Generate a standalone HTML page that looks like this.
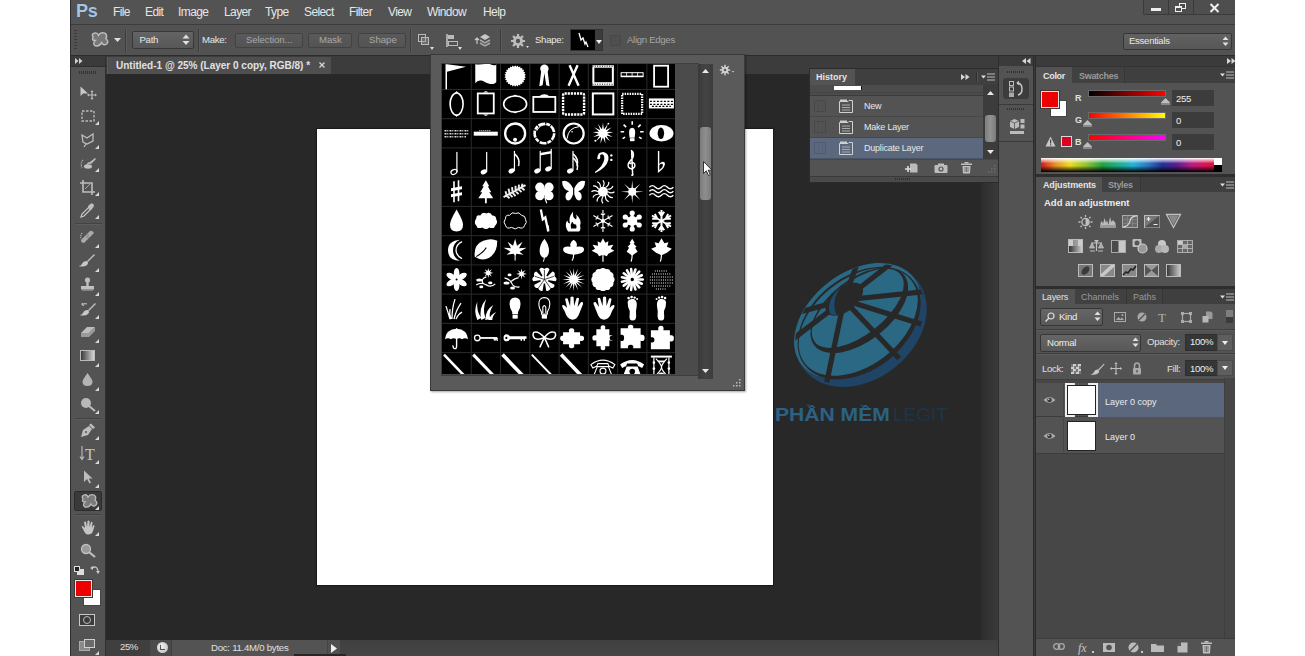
<!DOCTYPE html>
<html><head><meta charset="utf-8">
<style>
*{margin:0;padding:0;box-sizing:border-box}
html,body{width:1305px;height:656px;overflow:hidden;background:#fff}
body{font-family:"Liberation Sans",sans-serif;position:relative;color:#ddd}
.a{position:absolute}
.t{position:absolute;white-space:nowrap;line-height:1;font-family:"Liberation Sans",sans-serif}
svg.a{overflow:visible}
</style></head><body>
<div class="a" style="left:70px;top:0;width:1165px;height:656px;background:#535353"></div>
<!-- MENU BAR -->
<div class="a" style="left:70px;top:0;width:1px;height:656px;background:#2e2e2e;z-index:5"></div>
<div class="a" style="left:70px;top:0;width:1165px;height:24px;background:#535353"></div>
<div class="a" style="left:70px;top:24px;width:1165px;height:1px;background:#3c3c3c"></div>
<!-- Ps logo -->
<div class="t" style="left:76px;top:1px;font:bold 18px 'Liberation Sans',sans-serif;color:#a9c4df;letter-spacing:-0.3px;text-shadow:0 0 1px #2a4a6a">Ps</div>
<div class="t" style="left:113px;top:6px;font-size:12px;color:#e6e6e6;letter-spacing:-0.6px">File</div>
<div class="t" style="left:145px;top:6px;font-size:12px;color:#e6e6e6;letter-spacing:-0.6px">Edit</div>
<div class="t" style="left:178px;top:6px;font-size:12px;color:#e6e6e6;letter-spacing:-0.6px">Image</div>
<div class="t" style="left:224px;top:6px;font-size:12px;color:#e6e6e6;letter-spacing:-0.6px">Layer</div>
<div class="t" style="left:265px;top:6px;font-size:12px;color:#e6e6e6;letter-spacing:-0.6px">Type</div>
<div class="t" style="left:304px;top:6px;font-size:12px;color:#e6e6e6;letter-spacing:-0.6px">Select</div>
<div class="t" style="left:349px;top:6px;font-size:12px;color:#e6e6e6;letter-spacing:-0.6px">Filter</div>
<div class="t" style="left:388px;top:6px;font-size:12px;color:#e6e6e6;letter-spacing:-0.6px">View</div>
<div class="t" style="left:427px;top:6px;font-size:12px;color:#e6e6e6;letter-spacing:-0.6px">Window</div>
<div class="t" style="left:483px;top:6px;font-size:12px;color:#e6e6e6;letter-spacing:-0.6px">Help</div>
<!-- window buttons -->
<div class="a" style="left:1143px;top:0;width:92px;height:15px;background:#4e4e4e;border:1px solid #3a3a3a;border-top:0;border-right:0;border-radius:0 0 0 2px"></div>
<div class="a" style="left:1168px;top:0;width:1px;height:15px;background:#3a3a3a"></div>
<div class="a" style="left:1193px;top:0;width:1px;height:15px;background:#3a3a3a"></div>
<div class="a" style="left:1151px;top:8px;width:10px;height:3px;background:#eee"></div>
<div class="a" style="left:1179px;top:3px;width:7px;height:6px;border:1.5px solid #eee"></div>
<div class="a" style="left:1175px;top:6px;width:7px;height:6px;border:1.5px solid #eee;background:#4e4e4e;border-top-width:2.5px"></div>
<svg class="a" style="left:1209px;top:3px" width="11" height="10" viewBox="0 0 11 10"><path d="M1.5 1 L9.5 9 M9.5 1 L1.5 9" stroke="#eee" stroke-width="2"/></svg>

<!-- OPTIONS BAR -->
<div class="a" style="left:70px;top:25px;width:1165px;height:30px;background:#525252"></div>
<div class="a" style="left:70px;top:55px;width:1165px;height:1px;background:#2c2c2c"></div>
<!-- grip -->
<div class="a" style="left:74px;top:30px;width:3px;height:19px;background:repeating-linear-gradient(#3a3a3a 0 1px,transparent 1px 3px)"></div>
<!-- custom shape tool icon -->
<svg class="a" style="left:90px;top:31px" width="19" height="17" viewBox="0 0 18 16"><path d="M3 6 Q1 3 4 2 Q7 1 8 4 Q10 0.5 14 2 Q17 4 15 7 Q18 9.5 16 12 Q13 14.5 11 11 Q9 15 5 14 Q2 12 5 9 Q1 9 3 6 Z" fill="#777" stroke="#bdbdbd" stroke-width="1.4"/></svg>
<svg class="a" style="left:114px;top:38px" width="7" height="5" viewBox="0 0 7 5"><path d="M0 0H7L3.5 4Z" fill="#e0e0e0"/></svg>
<div class="a" style="left:125px;top:29px;width:1px;height:23px;background:#3c3c3c"></div>
<div class="a" style="left:126px;top:29px;width:1px;height:23px;background:#5c5c5c"></div>
<!-- Path dropdown -->
<div class="a" style="left:132px;top:31px;width:62px;height:18px;background:linear-gradient(#646464,#575757);border:1px solid #383838;border-radius:2px"></div>
<div class="t" style="left:139.5px;top:35px;font-size:9.6px;color:#e8e8e8;letter-spacing:-0.3px">Path</div>
<svg class="a" style="left:182px;top:34px" width="8" height="12" viewBox="0 0 8 12"><path d="M0.5 4.5H7.5L4 0.5Z M0.5 7H7.5L4 11Z" fill="#e0e0e0"/></svg>
<div class="a" style="left:198px;top:29px;width:1px;height:23px;background:#3c3c3c"></div>
<div class="a" style="left:199px;top:29px;width:1px;height:23px;background:#5c5c5c"></div>
<div class="t" style="left:202px;top:35px;font-size:9.6px;color:#e8e8e8;letter-spacing:-0.3px">Make:</div>
<!-- buttons -->
<div class="a" style="left:235px;top:33px;width:68px;height:15px;background:linear-gradient(#5a5a5a,#535353);border:1px solid #424242;border-radius:2px"></div>
<div class="t" style="left:246px;top:35px;font-size:9.6px;color:#a9a9a9;letter-spacing:-0.1px">Selection...</div>
<div class="a" style="left:308px;top:33px;width:44px;height:15px;background:linear-gradient(#5a5a5a,#535353);border:1px solid #424242;border-radius:2px"></div>
<div class="t" style="left:319px;top:35px;font-size:9.6px;color:#a9a9a9">Mask</div>
<div class="a" style="left:358px;top:33px;width:48px;height:15px;background:linear-gradient(#5a5a5a,#535353);border:1px solid #424242;border-radius:2px"></div>
<div class="t" style="left:369px;top:35px;font-size:9.6px;color:#a9a9a9">Shape</div>
<div class="a" style="left:410px;top:29px;width:1px;height:23px;background:#3c3c3c"></div>
<div class="a" style="left:411px;top:29px;width:1px;height:23px;background:#5c5c5c"></div>
<!-- path ops icon -->
<div class="a" style="left:418px;top:34px;width:8px;height:8px;border:1px solid #bbb"></div>
<div class="a" style="left:421px;top:37px;width:8px;height:8px;border:1px solid #bbb;background:rgba(150,150,150,.4)"></div>
<svg class="a" style="left:430px;top:47px" width="4" height="3"><path d="M0 0H4L2 3Z" fill="#ddd"/></svg>
<!-- align icon -->
<div class="a" style="left:446px;top:34px;width:2px;height:13px;background:#aaa"></div>
<div class="a" style="left:448px;top:35px;width:6px;height:4px;background:#bbb"></div>
<div class="a" style="left:448px;top:41px;width:10px;height:5px;border:1px solid #bbb"></div>
<svg class="a" style="left:458px;top:47px" width="4" height="3"><path d="M0 0H4L2 3Z" fill="#ddd"/></svg>
<!-- arrange icon -->
<svg class="a" style="left:472px;top:32px" width="20" height="18" viewBox="0 0 20 18"><path d="M3 8 L5 6 L7 8 M5 6 V12" stroke="#ccc" fill="none" stroke-width="1.2"/><path d="M8 5 L13 2 L18 5 L13 8Z" fill="#c8c8c8"/><path d="M8 8 L13 11 L18 8 M8 11 L13 14 L18 11" stroke="#aaa" stroke-width="1.5" fill="none"/></svg>
<div class="a" style="left:500px;top:29px;width:1px;height:23px;background:#3c3c3c"></div>
<div class="a" style="left:501px;top:29px;width:1px;height:23px;background:#5c5c5c"></div>
<!-- gear -->
<svg class="a" style="left:509px;top:32px" width="20" height="18" viewBox="0 0 20 18"><circle cx="9" cy="9" r="5" fill="#bdbdbd"/><g stroke="#bdbdbd" stroke-width="2.2"><path d="M9 2V16M2 9H16M4 4L14 14M14 4L4 14"/></g><circle cx="9" cy="9" r="2.2" fill="#525252"/><path d="M17 14H20L18.5 16Z" fill="#ddd"/></svg>
<div class="t" style="left:535px;top:35px;font-size:9.6px;color:#e8e8e8;letter-spacing:-0.3px">Shape:</div>
<!-- shape swatch -->
<div class="a" style="left:570px;top:29px;width:33px;height:22px;background:#3c3c3c;border:1px solid #333"></div>
<div class="a" style="left:571px;top:30px;width:24px;height:20px;background:#000"></div>
<svg class="a" style="left:578px;top:32px" width="11" height="16" viewBox="0 0 11 16"><path d="M1 1 L3 8 L5 6 L7 12 L8 10 L10 15" stroke="#fff" stroke-width="1.3" fill="none"/></svg>
<svg class="a" style="left:596px;top:40px" width="6" height="4"><path d="M0 0H6L3 4Z" fill="#eee"/></svg>
<!-- checkbox -->
<div class="a" style="left:610px;top:35px;width:11px;height:11px;background:#4f4f4f;border:1px solid #474747;border-radius:1px"></div>
<div class="t" style="left:627px;top:35px;font-size:9.6px;color:#a5a5a5;letter-spacing:-0.3px">Align Edges</div>
<!-- essentials -->
<div class="a" style="left:1123px;top:33px;width:109px;height:17px;background:linear-gradient(#626262,#575757);border:1px solid #363636;border-radius:2px"></div>
<div class="t" style="left:1129px;top:36px;font-size:9.6px;color:#e8e8e8;letter-spacing:-0.3px">Essentials</div>
<svg class="a" style="left:1222px;top:36px" width="7" height="11" viewBox="0 0 7 11"><path d="M0.5 4H6.5L3.5 0.5Z M0.5 6.5H6.5L3.5 10Z" fill="#e0e0e0"/></svg>
<!-- TAB ROW -->
<div class="a" style="left:106px;top:56px;width:892px;height:18px;background:#3c3c3c"></div>
<div class="a" style="left:107px;top:57px;width:224px;height:17px;background:#4f4f4f;border-left:1px solid #5a5a5a"></div>
<div class="t" style="left:116px;top:61px;font-weight:bold;font-size:10px;color:#e2e2e2">Untitled-1 @ 25% (Layer 0 copy, RGB/8) *</div>
<svg class="a" style="left:319px;top:62px" width="6" height="6"><path d="M0.5 0.5L5.5 5.5M5.5 0.5L0.5 5.5" stroke="#d8d8d8" stroke-width="1.3"/></svg>
<!-- CANVAS AREA -->
<div class="a" style="left:106px;top:74px;width:892px;height:566px;background:#282828"></div>
<div class="a" style="left:981px;top:183px;width:17px;height:457px;background:linear-gradient(90deg,#2c2c2c,#3a3a3a)"></div>
<div class="a" style="left:317px;top:129px;width:456px;height:456px;background:#fff;box-shadow:0 0 1px 1px #1a1a1a"></div>
<!-- STATUS BAR -->
<div class="a" style="left:106px;top:640px;width:892px;height:16px;background:linear-gradient(#404040,#454545)"></div>
<div class="a" style="left:106px;top:640px;width:44px;height:16px;background:#3f3f3f"></div>
<div class="t" style="left:120px;top:642px;font-size:9.6px;color:#e0e0e0;letter-spacing:-0.4px">25%</div>
<div class="a" style="left:150px;top:640px;width:22px;height:16px;background:#4b4b4b;border-right:1px solid #3e3e3e"></div>
<div class="a" style="left:157px;top:642px;width:11px;height:11px;border-radius:50%;background:radial-gradient(circle at 40% 40%,#f0f0f0,#b8b8b8)"></div>
<div class="a" style="left:160px;top:645px;width:5px;height:5px;border-left:1.5px solid #555;border-bottom:1.5px solid #555"></div>
<div class="a" style="left:172px;top:640px;width:155px;height:16px;background:#535353"></div>
<div class="t" style="left:211px;top:643px;font-size:9.6px;color:#e0e0e0;letter-spacing:-0.25px">Doc: 11.4M/0 bytes</div>
<div class="a" style="left:327px;top:640px;width:13px;height:16px;background:#505050;border-left:1px solid #444"></div>
<svg class="a" style="left:331px;top:644px" width="6" height="9"><path d="M0 0L6 4.5L0 9Z" fill="#f0f0f0"/></svg>
<div class="a" style="left:294px;top:654px;width:52px;height:2px;background:#262626"></div>
<!-- WATERMARK -->
<svg class="a" style="left:780px;top:250px" width="160" height="150" viewBox="780 250 160 150">
<defs><clipPath id="disc"><ellipse cx="0" cy="-2" rx="71" ry="52"/></clipPath></defs>
<g transform="translate(861 325.5) rotate(-38)">
<ellipse cx="0" cy="0" rx="72" ry="54" fill="#1f4466"/>
<ellipse cx="0" cy="-6" rx="71" ry="48" fill="#2a6883"/>
<ellipse cx="0" cy="-3" rx="69" ry="47" fill="#282828"/>
<ellipse cx="0" cy="-4.5" rx="67.5" ry="43.5" fill="#2a6883"/>
<ellipse cx="8" cy="-13" rx="57" ry="31" fill="#282828"/>
<ellipse cx="8" cy="-15.5" rx="54.5" ry="26.5" fill="#2a6883"/>
<g clip-path="url(#disc)">
<g transform="rotate(38) translate(-861 -325.5)" stroke="#282828" stroke-width="5.2">
<path d="M844 300 L862 250"/>
<path d="M844 300 L902 255"/>
<path d="M844 300 L940 290"/>
<path d="M844 300 L940 330"/>
<path d="M844 300 L910 370"/>
<path d="M844 300 L823 400"/>
<path d="M844 300 L785 345"/>
<path d="M844 300 L785 316"/>
</g>
</g>
<ellipse cx="3" cy="-31" rx="22" ry="12" fill="#282828"/>
<path d="M-17 -28 Q-14 -41 8 -43 Q-9 -38 -13 -23 Z" fill="#1f4a70"/>
</g>
</svg>
<div class="t" style="left:775px;top:405px;font-weight:bold;font-size:19px;color:#2b6283;transform:scaleX(1.11);transform-origin:0 0">PHẦN MỀM</div>
<div class="t" style="left:893px;top:405px;font-size:19px;color:#1d3549">LEGIT</div>
<!-- POPUP -->
<div class="a" style="left:430px;top:54px;width:315px;height:337px;background:#5a5a5a;border:1px solid #3a3a3a;box-shadow:1px 1px 2px rgba(0,0,0,.35)"></div>
<div class="a" style="left:441px;top:63px;width:258px;height:313px;background:#4b4b4b;border:1px solid #3e3e3e"></div>
<div class="a" style="left:442px;top:64px;width:233px;height:310px;overflow:hidden;background:#000">
<svg width="233" height="310" viewBox="442 64 233 310" style="position:absolute;left:0;top:0">
<rect x="442" y="88.94" width="234" height="1" fill="#2b2b2b"/>
<rect x="442" y="118.18" width="234" height="1" fill="#2b2b2b"/>
<rect x="442" y="147.42" width="234" height="1" fill="#2b2b2b"/>
<rect x="442" y="176.66" width="234" height="1" fill="#2b2b2b"/>
<rect x="442" y="205.90" width="234" height="1" fill="#2b2b2b"/>
<rect x="442" y="235.14" width="234" height="1" fill="#2b2b2b"/>
<rect x="442" y="264.38" width="234" height="1" fill="#2b2b2b"/>
<rect x="442" y="293.62" width="234" height="1" fill="#2b2b2b"/>
<rect x="442" y="322.86" width="234" height="1" fill="#2b2b2b"/>
<rect x="442" y="352.10" width="234" height="1" fill="#2b2b2b"/>
<rect x="470.77" y="64" width="1" height="310" fill="#2b2b2b"/>
<rect x="500.04" y="64" width="1" height="310" fill="#2b2b2b"/>
<rect x="529.31" y="64" width="1" height="310" fill="#2b2b2b"/>
<rect x="558.58" y="64" width="1" height="310" fill="#2b2b2b"/>
<rect x="587.85" y="64" width="1" height="310" fill="#2b2b2b"/>
<rect x="617.12" y="64" width="1" height="310" fill="#2b2b2b"/>
<rect x="646.39" y="64" width="1" height="310" fill="#2b2b2b"/>
<g transform="translate(442.00 60.20)"><path fill="#fff" d="M3.5 4 h1.5 v25 h-1.5z M5 4 L24 6.5 L5 11.5z"/></g>
<g transform="translate(471.27 60.20)"><path fill="#fff" d="M4 4 C10 5 14 3 19 4 C22 5 24 6 25 4 L25 22 C22 25 18 24 14 22 C10 19 6 20 4 23z"/></g>
<g transform="translate(500.54 60.20)"><path fill="#fff" d="M14.60,5.00 L15.73,6.47 L17.18,5.31 L17.93,7.01 L19.62,6.24 L19.94,8.06 L21.76,7.72 L21.64,9.57 L23.49,9.66 L22.92,11.43 L24.70,11.97 L23.73,13.55 L25.32,14.50 L24.00,15.80 L25.32,17.10 L23.73,18.05 L24.70,19.63 L22.92,20.17 L23.49,21.94 L21.64,22.03 L21.76,23.88 L19.94,23.54 L19.62,25.36 L17.93,24.59 L17.18,26.29 L15.73,25.13 L14.60,26.60 L13.47,25.13 L12.02,26.29 L11.27,24.59 L9.58,25.36 L9.26,23.54 L7.44,23.88 L7.56,22.03 L5.71,21.94 L6.28,20.17 L4.50,19.63 L5.47,18.05 L3.88,17.10 L5.20,15.80 L3.88,14.50 L5.47,13.55 L4.50,11.97 L6.28,11.43 L5.71,9.66 L7.56,9.57 L7.44,7.72 L9.26,8.06 L9.58,6.24 L11.27,7.01 L12.02,5.31 L13.47,6.47Z"/></g>
<g transform="translate(529.81 60.20)"><circle fill="#fff" cx="14.6" cy="8.5" r="4.2"/><path fill="#fff" d="M11.5 10 L9.5 26 L12.8 25 L14.6 13z M17.7 10 L19.7 26 L16.4 25 L14.6 13z"/></g>
<g transform="translate(559.08 60.20)"><path fill="none" stroke="#fff" stroke-width="2.4" d="M10.5 5 L19.5 25.5 M18.5 5 L9.5 25.5"/></g>
<g transform="translate(588.35 60.20)"><rect fill="#fff" x="4" y="5" width="21.5" height="20.5"/><rect fill="#000" x="6" y="7.5" width="17.5" height="14.5"/><path stroke="#000" stroke-width="1" stroke-dasharray="1 1.4" d="M4 6 H25 M4 24 H25"/></g>
<g transform="translate(617.62 60.20)"><rect fill="#fff" x="3" y="12" width="23" height="5"/><rect fill="#000" x="4" y="13" width="21" height="2.4"/><path stroke="#fff" stroke-width="0.8" d="M9 12 V17 M14.5 12 V17 M20 12 V17"/></g>
<g transform="translate(646.89 60.20)"><rect fill="none" stroke="#fff" stroke-width="1.8" x="7.2" y="5.5" width="14" height="21"/></g>
<g transform="translate(442.00 89.44)"><ellipse fill="none" stroke="#fff" stroke-width="1.6" cx="14.6" cy="14.6" rx="6.5" ry="11"/><path fill="#fff" d="M13 3.6h3.2l-1.6-2z M13 25.6h3.2l-1.6 2z"/></g>
<g transform="translate(471.27 89.44)"><rect fill="none" stroke="#fff" stroke-width="1.8" x="6.5" y="4" width="16" height="20"/><path fill="#fff" d="M12 3 Q14.6 0.5 17 3z M12 25 Q14.6 27.5 17 25z"/></g>
<g transform="translate(500.54 89.44)"><ellipse fill="none" stroke="#fff" stroke-width="1.6" cx="14.6" cy="14.6" rx="11.5" ry="8"/><path fill="#fff" d="M12.5 6.6 Q14.6 4 16.7 6.6z M12.5 22.6 Q14.6 25.2 16.7 22.6z"/></g>
<g transform="translate(529.81 89.44)"><rect fill="none" stroke="#fff" stroke-width="1.8" x="3.5" y="7.5" width="22" height="15"/><path fill="#fff" d="M9 7 Q14.6 2.5 20 7z"/></g>
<g transform="translate(559.08 89.44)"><rect fill="none" stroke="#fff" stroke-width="2.4" stroke-dasharray="2.2 0.9" x="4" y="4" width="21" height="21" rx="1.5"/></g>
<g transform="translate(588.35 89.44)"><rect fill="none" stroke="#fff" stroke-width="2" x="4.5" y="4" width="20.5" height="21"/></g>
<g transform="translate(617.62 89.44)"><rect fill="none" stroke="#fff" stroke-width="2.3" stroke-dasharray="1.5 1" x="4.5" y="4.5" width="20" height="20"/></g>
<g transform="translate(646.89 89.44)"><rect fill="#fff" x="2" y="9" width="25" height="10"/><path stroke="#000" stroke-width="1.2" stroke-dasharray="2 1.5" d="M3 12 H26 M3 15 H26 M5 17 H24"/></g>
<g transform="translate(442.00 118.68)"><path stroke="#ddd" stroke-width="1.6" stroke-dasharray="2 0.8 1 1.2" d="M2.5 12 H26.5 M2.5 15 H26.5 M2.5 18 H24"/></g>
<g transform="translate(471.27 118.68)"><rect fill="#fff" x="2.5" y="13" width="24" height="4"/><path stroke="#fff" stroke-width="1" stroke-dasharray="1 1" d="M8 12 H20"/></g>
<g transform="translate(500.54 118.68)"><circle fill="none" stroke="#fff" stroke-width="2.3" cx="14.6" cy="14.8" r="10"/><circle fill="#fff" cx="14.5" cy="21" r="2"/><path fill="#fff" d="M8 6 Q11 3 14 6z M15 6 Q18 3 21 6z"/></g>
<g transform="translate(529.81 118.68)"><circle fill="none" stroke="#fff" stroke-width="2.6" stroke-dasharray="7 1.2 4 1" cx="14.6" cy="14.8" r="9.8"/><path fill="none" stroke="#fff" stroke-width="1" d="M7 12 Q10 6 16 6"/></g>
<g transform="translate(559.08 118.68)"><circle fill="none" stroke="#fff" stroke-width="2.2" cx="14.6" cy="14.8" r="10"/><path fill="none" stroke="#fff" stroke-width="1" d="M8 20 Q9 9 20 8"/><circle fill="#fff" cx="13" cy="13" r="0.8"/></g>
<g transform="translate(588.35 118.68)"><path fill="#fff" d="M14.60,4.10 L15.56,10.72 L19.48,5.30 L17.25,11.61 L23.24,8.64 L18.34,13.18 L25.02,13.33 L18.57,15.08 L24.42,18.32 L17.89,16.87 L21.56,22.46 L16.46,18.14 L17.11,24.79 L14.60,18.60 L12.09,24.79 L12.74,18.14 L7.64,22.46 L11.31,16.87 L4.78,18.32 L10.63,15.08 L4.18,13.33 L10.86,13.18 L5.96,8.64 L11.95,11.61 L9.72,5.30 L13.64,10.72Z"/><circle fill="#fff" cx="14.6" cy="14.6" r="4.5"/><circle fill="#fff" cx="20" cy="5" r="0.9"/><circle fill="#fff" cx="7" cy="22" r="1"/></g>
<g transform="translate(617.62 118.68)"><path fill="#fff" d="M11.5 15 Q11 9 14.6 9 Q18 9 17.5 15 L17 19 H12z"/><rect fill="#fff" x="12.3" y="19.5" width="4.6" height="3"/><path fill="none" stroke="#fff" stroke-width="1.6" d="M14.6 2.5V6 M6 6 L8.5 8.5 M23 6 L20.5 8.5 M3 13 H6.5 M26 13 H22.5 M5 20 L7.5 18.5 M24 20 L21.5 18.5"/></g>
<g transform="translate(646.89 118.68)"><ellipse fill="#fff" cx="14.6" cy="14.6" rx="12" ry="8.2"/><ellipse fill="#000" cx="14" cy="14.6" rx="3.2" ry="5.8"/></g>
<g transform="translate(442.00 147.92)"><ellipse fill="none" stroke="#fff" stroke-width="1.2" cx="12" cy="24" rx="3.2" ry="2.3" transform="rotate(-25 12 24)"/><rect fill="#fff" x="14.3" y="4" width="1.2" height="20"/></g>
<g transform="translate(471.27 147.92)"><ellipse fill="#fff"  cx="12.5" cy="24" rx="3.2" ry="2.3" transform="rotate(-25 12.5 24)"/><rect fill="#fff" x="14.8" y="4" width="1.2" height="20"/></g>
<g transform="translate(500.54 147.92)"><ellipse fill="#fff"  cx="11" cy="23" rx="3.2" ry="2.3" transform="rotate(-25 11 23)"/><rect fill="#fff" x="13.3" y="3" width="1.2" height="20"/><path fill="none" stroke="#fff" stroke-width="1.6" d="M14 6 Q20 11 18 18"/></g>
<g transform="translate(529.81 147.92)"><g><ellipse fill="#fff"  cx="7.5" cy="23" rx="3.2" ry="2.3" transform="rotate(-25 7.5 23)"/><rect fill="#fff" x="9.8" y="3" width="1.2" height="20"/><ellipse fill="#fff"  cx="18.5" cy="21" rx="3.2" ry="2.3" transform="rotate(-25 18.5 21)"/><rect fill="#fff" x="20.8" y="1" width="1.2" height="20"/><path fill="#fff" d="M10.2 5 L21.5 3 L21.5 5.5 L10.2 7.5z"/></g></g>
<g transform="translate(559.08 147.92)"><ellipse fill="#fff"  cx="11" cy="23" rx="3.2" ry="2.3" transform="rotate(-25 11 23)"/><rect fill="#fff" x="13.3" y="3" width="1.2" height="20"/><path fill="none" stroke="#fff" stroke-width="1.6" d="M14 6 Q20 11 18 18"/><path fill="none" stroke="#fff" stroke-width="1.6" d="M14 10 Q20 15 18 22"/></g>
<g transform="translate(588.35 147.92)"><path fill="#fff" d="M9 10 Q9 4 15 4 Q21 5 20 12 Q18 20 7 25 L6.5 24 Q15 18 16 11 Q16 6 13 6.5 Q11 7 12 9 Q12 12 9 11z"/><circle fill="#fff" cx="23" cy="7.5" r="1.2"/><circle fill="#fff" cx="23" cy="12" r="1.2"/></g>
<g transform="translate(617.62 147.92)"><path fill="none" stroke="#fff" stroke-width="1.5" d="M15 26 Q16 28 13.5 27 M15 26 L14 3 Q17 5 15 10 L11 15 Q9 20 14 21 Q18 20 17 16 Q15 13 12 16"/></g>
<g transform="translate(646.89 147.92)"><path fill="#fff" d="M11 3 h1.4 v13 Q16 12 18 15 Q19 19 11 25z"/><path fill="#000" d="M12.4 17 Q15 15 16 16.5 Q16.5 19 12.4 22z"/></g>
<g transform="translate(442.00 177.16)"><path fill="none" stroke="#fff" stroke-width="1.6" d="M12 4 V25 M16.5 3 V24"/><path fill="#fff" d="M9 11 L20 9 V12 L9 14z M9 17 L20 15 V18 L9 20z"/></g>
<g transform="translate(471.27 177.16)"><path fill="#fff" d="M14.6 3 L18 9 L16.5 9 L20 15 L18 15 L22 21 L15.5 21 V26 H13.7 V21 L7 21 L11 15 L9 15 L12.5 9 L11 9z"/></g>
<g transform="translate(500.54 177.16)"><path stroke="#eee" stroke-width="1.9" fill="none" d="M3 20 L25 8 M6 18 L5 14 M9 16.5 L8 11.5 M12 15 L11.5 10 M15 13.3 L15 8.5 M18 11.7 L18.5 7.5 M21 10 L22 6.5 M6 18.5 L9 21 M9 17 L12 20 M12 15.5 L15 19 M15 14 L18 17 M18 12 L21 15 M21 10.5 L24 13"/></g>
<g transform="translate(529.81 177.16)"><circle fill="#fff" cx="10" cy="10" r="4.6"/><circle fill="#fff" cx="19.2" cy="10" r="4.6"/><circle fill="#fff" cx="10" cy="18.5" r="4.6"/><circle fill="#fff" cx="19.2" cy="18.5" r="4.6"/><rect fill="#fff" x="11" y="11" width="7" height="7"/><path fill="none" stroke="#fff" stroke-width="1.2" d="M15 20 Q16 24 17 26"/></g>
<g transform="translate(559.08 177.16)"><path fill="#fff" d="M14 11 Q9 2 3 4 Q3 12 10 14 Q5 16 7 22 Q11 26 14 17z M15.2 11 Q20 2 26 4 Q26 12 19 14 Q24 16 22 22 Q18 26 15.2 17z"/></g>
<g transform="translate(588.35 177.16)"><path stroke="#fff" stroke-width="1.2" fill="none" d="M19.60 14.60 Q23.29 16.93 26.10 14.60"/><path stroke="#fff" stroke-width="1.2" fill="none" d="M18.93 17.10 Q20.96 20.96 24.56 20.35"/><path stroke="#fff" stroke-width="1.2" fill="none" d="M17.10 18.93 Q16.93 23.29 20.35 24.56"/><path stroke="#fff" stroke-width="1.2" fill="none" d="M14.60 19.60 Q12.27 23.29 14.60 26.10"/><path stroke="#fff" stroke-width="1.2" fill="none" d="M12.10 18.93 Q8.24 20.96 8.85 24.56"/><path stroke="#fff" stroke-width="1.2" fill="none" d="M10.27 17.10 Q5.91 16.93 4.64 20.35"/><path stroke="#fff" stroke-width="1.2" fill="none" d="M9.60 14.60 Q5.91 12.27 3.10 14.60"/><path stroke="#fff" stroke-width="1.2" fill="none" d="M10.27 12.10 Q8.24 8.24 4.64 8.85"/><path stroke="#fff" stroke-width="1.2" fill="none" d="M12.10 10.27 Q12.27 5.91 8.85 4.64"/><path stroke="#fff" stroke-width="1.2" fill="none" d="M14.60 9.60 Q16.93 5.91 14.60 3.10"/><path stroke="#fff" stroke-width="1.2" fill="none" d="M17.10 10.27 Q20.96 8.24 20.35 4.64"/><path stroke="#fff" stroke-width="1.2" fill="none" d="M18.93 12.10 Q23.29 12.27 24.56 8.85"/><circle fill="#fff" cx="14.6" cy="14.6" r="5"/></g>
<g transform="translate(617.62 177.16)"><path fill="#fff" d="M14.60,3.10 L15.44,12.57 L22.73,6.47 L16.63,13.76 L26.10,14.60 L16.63,15.44 L22.73,22.73 L15.44,16.63 L14.60,26.10 L13.76,16.63 L6.47,22.73 L12.57,15.44 L3.10,14.60 L12.57,13.76 L6.47,6.47 L13.76,12.57Z"/><circle fill="#fff" cx="14.6" cy="14.6" r="4"/></g>
<g transform="translate(646.89 177.16)"><path fill="none" stroke="#fff" stroke-width="1.4" d="M2.5 10 Q5.5 7 8.5 10 T14.5 10 T20.5 10 T26.5 10 M2.5 14 Q5.5 11 8.5 14 T14.5 14 T20.5 14 T26.5 14 M2.5 18 Q5.5 15 8.5 18 T14.5 18 T20.5 18 T26.5 18"/></g>
<g transform="translate(442.00 206.40)"><path fill="#fff" d="M14.6 3 Q21 14 21 18 Q21 25 14.6 25 Q8 25 8 18 Q8 14 14.6 3z"/></g>
<g transform="translate(471.27 206.40)"><path fill="#fff" d="M5 12 Q5 8 9 9 Q11 5 15 7 Q19 5 21 9 Q25 9 25 13 Q27 16 24 19 Q23 23 18 21 Q15 24 11 21 Q6 23 5 19 Q2 16 5 12z"/></g>
<g transform="translate(500.54 206.40)"><path fill="none" stroke="#fff" stroke-width="1" d="M5 12 Q5 8 9 9 Q11 5 15 7 Q19 5 21 9 Q25 9 25 13 Q27 16 24 19 Q23 23 18 21 Q15 24 11 21 Q6 23 5 19 Q2 16 5 12z"/></g>
<g transform="translate(529.81 206.40)"><path fill="none" stroke="#fff" stroke-width="2.3" d="M11 3 L13 13 L15.5 11 L18.5 25 L17.8 19"/></g>
<g transform="translate(559.08 206.40)"><path fill="#fff" d="M9 25 Q5 19 8 14 Q9 17 11 17 Q9 11 14 5 Q13 11 17 13 Q18 10 17 8 Q23 13 21 19 Q22 23 20 25z"/><path fill="#000" d="M12 22 Q11 18 13 15 Q15 19 17 18 Q18 21 17 22z"/></g>
<g transform="translate(588.35 206.40)"><path stroke="#fff" stroke-width="1.1" fill="none" d="M14.6 14.6 L14.60 3.60 M16.77 7.35 L14.60 8.60 L12.43 7.35"/><path stroke="#fff" stroke-width="1.1" fill="none" d="M14.6 14.6 L24.13 9.10 M21.96 12.85 L19.80 11.60 L19.80 9.10"/><path stroke="#fff" stroke-width="1.1" fill="none" d="M14.6 14.6 L24.13 20.10 M19.80 20.10 L19.80 17.60 L21.96 16.35"/><path stroke="#fff" stroke-width="1.1" fill="none" d="M14.6 14.6 L14.60 25.60 M12.43 21.85 L14.60 20.60 L16.77 21.85"/><path stroke="#fff" stroke-width="1.1" fill="none" d="M14.6 14.6 L5.07 20.10 M7.24 16.35 L9.40 17.60 L9.40 20.10"/><path stroke="#fff" stroke-width="1.1" fill="none" d="M14.6 14.6 L5.07 9.10 M9.40 9.10 L9.40 11.60 L7.24 12.85"/><circle fill="#fff" cx="14.6" cy="14.6" r="2"/></g>
<g transform="translate(617.62 206.40)"><path stroke="#fff" stroke-width="3" fill="none" d="M14.6 14.6 L14.60 4.60"/><circle fill="#fff" cx="14.60" cy="6.60" r="2.6"/><path stroke="#fff" stroke-width="3" fill="none" d="M14.6 14.6 L23.26 9.60"/><circle fill="#fff" cx="21.53" cy="10.60" r="2.6"/><path stroke="#fff" stroke-width="3" fill="none" d="M14.6 14.6 L23.26 19.60"/><circle fill="#fff" cx="21.53" cy="18.60" r="2.6"/><path stroke="#fff" stroke-width="3" fill="none" d="M14.6 14.6 L14.60 24.60"/><circle fill="#fff" cx="14.60" cy="22.60" r="2.6"/><path stroke="#fff" stroke-width="3" fill="none" d="M14.6 14.6 L5.94 19.60"/><circle fill="#fff" cx="7.67" cy="18.60" r="2.6"/><path stroke="#fff" stroke-width="3" fill="none" d="M14.6 14.6 L5.94 9.60"/><circle fill="#fff" cx="7.67" cy="10.60" r="2.6"/><circle fill="#fff" cx="14.6" cy="14.6" r="5"/></g>
<g transform="translate(646.89 206.40)"><path stroke="#fff" stroke-width="2" fill="none" d="M14.6 14.6 L14.60 3.60 M17.28 5.35 L14.60 9.60 L11.92 5.35"/><path stroke="#fff" stroke-width="2" fill="none" d="M14.6 14.6 L24.13 9.10 M23.95 12.30 L18.93 12.10 L21.27 7.65"/><path stroke="#fff" stroke-width="2" fill="none" d="M14.6 14.6 L24.13 20.10 M21.27 21.55 L18.93 17.10 L23.95 16.90"/><path stroke="#fff" stroke-width="2" fill="none" d="M14.6 14.6 L14.60 25.60 M11.92 23.85 L14.60 19.60 L17.28 23.85"/><path stroke="#fff" stroke-width="2" fill="none" d="M14.6 14.6 L5.07 20.10 M5.25 16.90 L10.27 17.10 L7.93 21.55"/><path stroke="#fff" stroke-width="2" fill="none" d="M14.6 14.6 L5.07 9.10 M7.93 7.65 L10.27 12.10 L5.25 12.30"/></g>
<g transform="translate(442.00 235.64)"><path fill="#fff" d="M18 4 Q6 5 6 14.6 Q6 25 18 25 Q11 22 11 14.6 Q11 7 18 4z"/><path fill="none" stroke="#fff" stroke-width="1.3" d="M20 6 Q14 9 14 14.6 Q14 20 20 23"/></g>
<g transform="translate(471.27 235.64)"><path fill="#fff" d="M3.5 21 Q2 9 12 5 Q20 2 26 5 Q26 17 18 22 Q11 26 3.5 21z"/><path stroke="#000" stroke-width="1.1" fill="none" d="M5 21 Q12 17 15 12"/></g>
<g transform="translate(500.54 235.64)"><path fill="#fff" d="M14.6 3 L16.5 10 L22 6 L18.5 12.5 L26 12 L19 16 L23 19 L16 18 L14.6 20 L13 18 L6 19 L10 16 L3 12 L10.5 12.5 L7 6 L12.5 10z"/><path fill="none" stroke="#fff" stroke-width="1" d="M14.6 18 V25"/></g>
<g transform="translate(529.81 235.64)"><path fill="#fff" d="M14.6 3 Q20 10 19 17 Q18 22 14.6 22 Q11 22 10 17 Q9 10 14.6 3z"/><path fill="none" stroke="#fff" stroke-width="1" d="M14.6 20 Q14.6 24 13.5 26"/></g>
<g transform="translate(559.08 235.64)"><path fill="#fff" d="M14.6 4 Q19 7 17.5 11 Q25 10 25 14 Q25 18 14.6 19 Q4 18 4 14 Q4 10 11.5 11 Q10 7 14.6 4z"/><path fill="none" stroke="#fff" stroke-width="1.2" d="M14.6 18 Q14.6 23 13 25"/></g>
<g transform="translate(588.35 235.64)"><path fill="#fff" d="M14.6 2.5 L17 7 L20 5.5 L19.5 10 L25 9 L22.5 13 L26 15 L20 18 L18.5 20.5 L14.6 19 L10.7 20.5 L9.2 18 L3.2 15 L6.7 13 L4.2 9 L9.7 10 L9.2 5.5 L12.2 7z"/><path fill="none" stroke="#fff" stroke-width="1.2" d="M14.6 18 V26"/></g>
<g transform="translate(617.62 235.64)"><path fill="#fff" d="M14.6 3 L17 7 L16 8 L19 11 L17.5 12 L20 16 L17 18 L14.6 20 L12 18 L9 16 L11.5 12 L10 11 L13 8 L12 7z"/><path fill="none" stroke="#fff" stroke-width="1.2" d="M14.6 18 Q14.6 23 13.5 26"/></g>
<g transform="translate(646.89 235.64)"><path fill="#fff" d="M14.6 2.5 L17.5 7.5 L21.5 6.5 L20 11 L25 13 L20 17 L14.6 19.5 L9.2 17 L4.2 13 L9.2 11 L7.7 6.5 L11.7 7.5z"/><path fill="none" stroke="#fff" stroke-width="1.2" d="M14.6 18 Q14.6 23 13.5 26"/></g>
<g transform="translate(442.00 264.88)"><ellipse fill="#fff" cx="14.60" cy="8.60" rx="5.5" ry="2.8" transform="rotate(-90 14.60 8.60)"/><ellipse fill="#fff" cx="19.80" cy="11.60" rx="5.5" ry="2.8" transform="rotate(-30 19.80 11.60)"/><ellipse fill="#fff" cx="19.80" cy="17.60" rx="5.5" ry="2.8" transform="rotate(30 19.80 17.60)"/><ellipse fill="#fff" cx="14.60" cy="20.60" rx="5.5" ry="2.8" transform="rotate(90 14.60 20.60)"/><ellipse fill="#fff" cx="9.40" cy="17.60" rx="5.5" ry="2.8" transform="rotate(150 9.40 17.60)"/><ellipse fill="#fff" cx="9.40" cy="11.60" rx="5.5" ry="2.8" transform="rotate(210 9.40 11.60)"/><circle fill="#fff" cx="14.6" cy="14.6" r="3.5"/><circle fill="#000" cx="14.6" cy="14.6" r="1"/></g>
<g transform="translate(471.27 264.88)"><path fill="#fff" d="M17.00,3.00 L17.77,6.15 L20.54,4.46 L18.85,7.23 L22.00,8.00 L18.85,8.77 L20.54,11.54 L17.77,9.85 L17.00,13.00 L16.23,9.85 L13.46,11.54 L15.15,8.77 L12.00,8.00 L15.15,7.23 L13.46,4.46 L16.23,6.15Z"/><path fill="none" stroke="#fff" stroke-width="1.2" d="M5 20 Q10 17 15 20 Q20 23 24 19 M12 19 Q9 14 15 12"/><ellipse fill="#fff" cx="8" cy="15" rx="3" ry="1.5"/><ellipse fill="#fff" cx="10" cy="22" rx="2" ry="1.3"/><ellipse fill="#fff" cx="19" cy="18" rx="2.2" ry="1.3"/></g>
<g transform="translate(500.54 264.88)"><path fill="#fff" d="M21.00,3.50 L21.77,7.15 L24.89,5.11 L22.85,8.23 L26.50,9.00 L22.85,9.77 L24.89,12.89 L21.77,10.85 L21.00,14.50 L20.23,10.85 L17.11,12.89 L19.15,9.77 L15.50,9.00 L19.15,8.23 L17.11,5.11 L20.23,7.15Z"/><path fill="none" stroke="#fff" stroke-width="1.2" d="M4 13 Q9 14 11 18 Q13 23 19 22 M10 17 Q15 13 18 13"/><ellipse fill="#fff" cx="6" cy="18" rx="3" ry="1.5"/><ellipse fill="#fff" cx="12" cy="23" rx="2.5" ry="1.5"/><ellipse fill="#fff" cx="9" cy="10" rx="2" ry="1.3"/></g>
<g transform="translate(529.81 264.88)"><path fill="#fff" transform="rotate(0 14.6 14.6)" d="M14.6 14.6 L9.5 4.5 Q11 1.5 14.6 4 Q18.2 1.5 19.7 4.5 Z"/><path fill="#fff" transform="rotate(72 14.6 14.6)" d="M14.6 14.6 L9.5 4.5 Q11 1.5 14.6 4 Q18.2 1.5 19.7 4.5 Z"/><path fill="#fff" transform="rotate(144 14.6 14.6)" d="M14.6 14.6 L9.5 4.5 Q11 1.5 14.6 4 Q18.2 1.5 19.7 4.5 Z"/><path fill="#fff" transform="rotate(216 14.6 14.6)" d="M14.6 14.6 L9.5 4.5 Q11 1.5 14.6 4 Q18.2 1.5 19.7 4.5 Z"/><path fill="#fff" transform="rotate(288 14.6 14.6)" d="M14.6 14.6 L9.5 4.5 Q11 1.5 14.6 4 Q18.2 1.5 19.7 4.5 Z"/><circle fill="#fff" cx="14.6" cy="14.6" r="4"/><path stroke="#000" stroke-width="0.7" d="M14.6 14.6 L14.6 5 M14.6 14.6 L24 11.5 M14.6 14.6 L20.5 23 M14.6 14.6 L8.7 23 M14.6 14.6 L5.2 11.5"/></g>
<g transform="translate(559.08 264.88)"><path fill="#fff" d="M14.60,3.10 L15.38,10.68 L19.00,3.98 L16.82,11.27 L22.73,6.47 L17.93,12.38 L25.22,10.20 L18.52,13.82 L26.10,14.60 L18.52,15.38 L25.22,19.00 L17.93,16.82 L22.73,22.73 L16.82,17.93 L19.00,25.22 L15.38,18.52 L14.60,26.10 L13.82,18.52 L10.20,25.22 L12.38,17.93 L6.47,22.73 L11.27,16.82 L3.98,19.00 L10.68,15.38 L3.10,14.60 L10.68,13.82 L3.98,10.20 L11.27,12.38 L6.47,6.47 L12.38,11.27 L10.20,3.98 L13.82,10.68Z"/></g>
<g transform="translate(588.35 264.88)"><ellipse fill="#fff" cx="22.60" cy="14.60" rx="3.6" ry="3.6"/><ellipse fill="#fff" cx="21.53" cy="18.60" rx="3.6" ry="3.6"/><ellipse fill="#fff" cx="18.60" cy="21.53" rx="3.6" ry="3.6"/><ellipse fill="#fff" cx="14.60" cy="22.60" rx="3.6" ry="3.6"/><ellipse fill="#fff" cx="10.60" cy="21.53" rx="3.6" ry="3.6"/><ellipse fill="#fff" cx="7.67" cy="18.60" rx="3.6" ry="3.6"/><ellipse fill="#fff" cx="6.60" cy="14.60" rx="3.6" ry="3.6"/><ellipse fill="#fff" cx="7.67" cy="10.60" rx="3.6" ry="3.6"/><ellipse fill="#fff" cx="10.60" cy="7.67" rx="3.6" ry="3.6"/><ellipse fill="#fff" cx="14.60" cy="6.60" rx="3.6" ry="3.6"/><ellipse fill="#fff" cx="18.60" cy="7.67" rx="3.6" ry="3.6"/><ellipse fill="#fff" cx="21.53" cy="10.60" rx="3.6" ry="3.6"/><circle fill="#fff" cx="14.6" cy="14.6" r="9"/></g>
<g transform="translate(617.62 264.88)"><path stroke="#fff" stroke-width="2.6" stroke-linecap="round" d="M17.60 14.60 L25.10 14.60"/><path stroke="#fff" stroke-width="2.6" stroke-linecap="round" d="M17.34 15.82 L24.19 18.87"/><path stroke="#fff" stroke-width="2.6" stroke-linecap="round" d="M16.61 16.83 L21.63 22.40"/><path stroke="#fff" stroke-width="2.6" stroke-linecap="round" d="M15.53 17.45 L17.84 24.59"/><path stroke="#fff" stroke-width="2.6" stroke-linecap="round" d="M14.29 17.58 L13.50 25.04"/><path stroke="#fff" stroke-width="2.6" stroke-linecap="round" d="M13.10 17.20 L9.35 23.69"/><path stroke="#fff" stroke-width="2.6" stroke-linecap="round" d="M12.17 16.36 L6.11 20.77"/><path stroke="#fff" stroke-width="2.6" stroke-linecap="round" d="M11.67 15.22 L4.33 16.78"/><path stroke="#fff" stroke-width="2.6" stroke-linecap="round" d="M11.67 13.98 L4.33 12.42"/><path stroke="#fff" stroke-width="2.6" stroke-linecap="round" d="M12.17 12.84 L6.11 8.43"/><path stroke="#fff" stroke-width="2.6" stroke-linecap="round" d="M13.10 12.00 L9.35 5.51"/><path stroke="#fff" stroke-width="2.6" stroke-linecap="round" d="M14.29 11.62 L13.50 4.16"/><path stroke="#fff" stroke-width="2.6" stroke-linecap="round" d="M15.53 11.75 L17.84 4.61"/><path stroke="#fff" stroke-width="2.6" stroke-linecap="round" d="M16.61 12.37 L21.63 6.80"/><path stroke="#fff" stroke-width="2.6" stroke-linecap="round" d="M17.34 13.38 L24.19 10.33"/></g>
<g transform="translate(646.89 264.88)"><path stroke="#ccc" stroke-width="1.5" stroke-dasharray="0.8 1.4" fill="none" d="M5 9 H24 M3 12 H26 M3 15 H26 M3 18 H26 M5 21 H24 M8 6 H21 M9 24 H20"/></g>
<g transform="translate(442.00 294.12)"><path fill="none" stroke="#fff" stroke-width="1.3" d="M8 25 Q6 18 4 12 M10 25 Q10 14 13 5 M12 25 Q14 16 19 9 M14 25 Q16 20 20 18 M9 25 Q7 20 8 15"/></g>
<g transform="translate(471.27 294.12)"><path fill="#fff" d="M6 26 Q2 16 6 8 Q5 17 10 24z M10 26 Q7 14 15 5 Q11 15 14 24z M14 26 Q14 16 22 11 Q17 19 19 25z M17 26 Q20 20 25 18 Q21 22 21 26z"/></g>
<g transform="translate(500.54 294.12)"><path fill="#fff" d="M14.6 3.5 Q20 3.5 20 10 Q20 14 17.5 18 V20 H11.7 V18 Q9 14 9 10 Q9 3.5 14.6 3.5z"/><rect fill="#fff" x="12" y="20.5" width="5.2" height="4"/></g>
<g transform="translate(529.81 294.12)"><path fill="none" stroke="#fff" stroke-width="1.1" d="M14.6 3.5 Q20 3.5 20 10 Q20 14 17.5 18 V20 H11.7 V18 Q9 14 9 10 Q9 3.5 14.6 3.5z M13 19 V13 Q14.6 10 16 13 V19"/><rect fill="#fff" x="12" y="20.5" width="5.2" height="4"/></g>
<g transform="translate(559.08 294.12)"><path fill="#fff" d="M5.5 17 Q2 12 3.5 11 Q5 10 8 14 L6 5 Q7 3.5 8.5 4.5 L11 12 L11.5 3 Q13 2 14.5 3 L15 12 L17.5 4 Q19 3 20 4.5 L18.5 13 L22 8 Q24.5 7.5 24 10 L20 20 Q18 26 12.5 25.5 Q8 25 5.5 17z"/></g>
<g transform="translate(588.35 294.12)"><path fill="#fff" d="M23.7 17 Q27.2 12 25.7 11 Q24.2 10 21.2 14 L23.2 5 Q22.2 3.5 20.7 4.5 L18.2 12 L17.7 3 Q16.2 2 14.7 3 L14.2 12 L11.7 4 Q10.2 3 9.2 4.5 L10.7 13 L7.2 8 Q4.7 7.5 5.2 10 L9.2 20 Q11.2 26 16.7 25.5 Q21.2 25 23.7 17z"/></g>
<g transform="translate(617.62 294.12)"><path fill="#fff" d="M10 8 Q11 4.5 16 5 Q20 6.5 19 13 Q18 17 18.5 21 Q19 26.5 15 26.5 Q11 26.5 12 21 Q13 17 10.5 13z"/><circle fill="#fff" cx="11" cy="4" r="1.3"/><circle fill="#fff" cx="14" cy="3" r="1.3"/><circle fill="#fff" cx="17" cy="3.5" r="1.2"/><circle fill="#fff" cx="19.5" cy="5" r="1"/></g>
<g transform="translate(646.89 294.12)"><path fill="#fff" d="M19.2 8 Q18.2 4.5 13.2 5 Q9.2 6.5 10.2 13 Q11.2 17 10.7 21 Q10.2 26.5 14.2 26.5 Q18.2 26.5 17.2 21 Q16.2 17 18.7 13z"/><circle fill="#fff" cx="18.2" cy="4" r="1.3"/><circle fill="#fff" cx="15.2" cy="3" r="1.3"/><circle fill="#fff" cx="12.2" cy="3.5" r="1.2"/><circle fill="#fff" cx="9.7" cy="5" r="1"/></g>
<g transform="translate(442.00 323.36)"><path fill="#fff" d="M3 16 Q4 6 14.6 5.5 Q25 6 26 16 Q23 14 20 16 Q17.5 14 14.6 16 Q11.5 14 9 16 Q6 14 3 16z"/><path fill="none" stroke="#fff" stroke-width="1.4" d="M14.6 5 V23 Q14.6 26 12 25 Q10.5 24 11 22"/></g>
<g transform="translate(471.27 323.36)"><circle fill="none" stroke="#fff" stroke-width="1.3" cx="6" cy="14.6" r="2.8"/><path fill="none" stroke="#fff" stroke-width="1.8" d="M8.8 14.6 H26"/><path fill="#fff" d="M22 14.6 h4.5 v3 h-1.2 v-1.3 h-1 v1.3 h-1.2 v-1.3 h-1z"/></g>
<g transform="translate(500.54 323.36)"><path fill="#fff" d="M3 14.6 Q3 11 6 11 Q8 11 9.5 13 H26 V15.5 H24.5 V17.5 H23 V15.8 H21.5 V17.5 H20 V16 H9.5 Q8 18 6 18 Q3 18 3 14.6z"/><circle fill="#000" cx="5.8" cy="14.6" r="1.1"/></g>
<g transform="translate(529.81 323.36)"><path fill="none" stroke="#fff" stroke-width="1.5" d="M14.6 14 Q8 7 4 9 Q2 12 5 15 Q9 17 14.6 14 Q20 7 25 9 Q27 12 24 15 Q20 17 14.6 14 L10 24 M14.6 14 L19 24"/></g>
<g transform="translate(559.08 323.36)"><path fill="#fff" d="M4 9 H10 Q9 5 12.5 5 Q16 5 15 9 H21 V12.5 Q25 11.5 25 15 Q25 18.5 21 17.5 V21 H15 Q16 25 12.5 25 Q9 25 10 21 H4 V17.5 Q1 18.5 1 15 Q1 11.5 4 12.5z"/></g>
<g transform="translate(588.35 323.36)"><path fill="#fff" d="M8 6 H12.5 Q11.5 2 14.6 2 Q17.7 2 16.7 6 H21 V12 Q25 11 25 14.6 Q25 18 21 17 V23 H16.7 Q17.7 27 14.6 27 Q11.5 27 12.5 23 H8 V17 Q4 18 4 14.6 Q4 11 8 12z"/><circle fill="#000" cx="23.5" cy="14.6" r="2.2"/></g>
<g transform="translate(617.62 323.36)"><path fill="#fff" d="M3 5 H10.5 Q9.5 1.5 13 1.5 Q16.5 1.5 15.5 5 H23 V11.5 Q27 10.5 27 14.6 Q27 18.5 23 17.5 V25 H15.5 Q16.5 21.5 13 21.5 Q9.5 21.5 10.5 25 H3 V17.5 Q6.5 18.5 6.5 14.6 Q6.5 10.5 3 11.5z"/></g>
<g transform="translate(646.89 323.36)"><path fill="#fff" d="M4 7 H11.5 Q10.5 2.5 14 2.5 Q17.5 2.5 16.5 7 H23 V12 Q27 11 27 15 Q27 19 23 18 V26 H4 V19 Q7.5 20 7.5 16.5 Q7.5 13 4 14z"/></g>
<g transform="translate(442.00 352.60)"><path fill="none" stroke="#fff" stroke-width="2.6" d="M2 2 L25 26"/></g>
<g transform="translate(471.27 352.60)"><path fill="none" stroke="#fff" stroke-width="3" d="M2 2 L25 26"/></g>
<g transform="translate(500.54 352.60)"><path fill="none" stroke="#fff" stroke-width="3.6" d="M2 2 L25 26"/></g>
<g transform="translate(529.81 352.60)"><path fill="none" stroke="#fff" stroke-width="2" d="M2 2 L25 26"/></g>
<g transform="translate(559.08 352.60)"><path fill="none" stroke="#fff" stroke-width="3.6" d="M2 2 L25 26"/></g>
<g transform="translate(588.35 352.60)"><path fill="none" stroke="#fff" stroke-width="1.1" d="M2.5 12 Q14.6 3 26.5 12 L24.5 15.5 L20.5 13.5 L19.5 11 H9.5 L8.5 13.5 L4.5 15.5z M9 14 L5 24 H24 L20 14z"/><circle fill="none" stroke="#fff" stroke-width="1.1" cx="14.6" cy="18.5" r="3"/></g>
<g transform="translate(617.62 352.60)"><path fill="#fff" d="M2.5 12 Q14.6 3 26.5 12 L24.5 15.5 L20.5 13.5 L19.5 11 H9.5 L8.5 13.5 L4.5 15.5z M9 14 L4.5 26 H24.5 L20 14z"/><circle fill="#000" cx="14.6" cy="19" r="2.8"/></g>
<g transform="translate(646.89 352.60)"><path fill="#fff" d="M4 3 H25 V5 H4z"/><path fill="none" stroke="#fff" stroke-width="1.2" d="M7 5 V24 M22 5 V24 M9 6 Q14.6 12 14.6 14.6 Q14.6 17 9 23 M20 6 Q14.6 12 14.6 14.6 Q14.6 17 20 23"/><path fill="#fff" d="M10 8 Q14.6 12 19 8z M10 23 Q14.6 17 19 23z"/><circle fill="#fff" cx="7" cy="10" r="1.3"/><circle fill="#fff" cx="7" cy="16" r="1.3"/><circle fill="#fff" cx="22" cy="10" r="1.3"/><circle fill="#fff" cx="22" cy="16" r="1.3"/></g>
</svg></div>
<div class="a" style="left:698px;top:64px;width:15px;height:315px;background:linear-gradient(90deg,#3a3a3a,#444 50%,#3c3c3c)"></div>
<svg class="a" style="left:702px;top:69px" width="7" height="5"><path d="M0 4H7L3.5 0Z" fill="#e8e8e8"/></svg>
<svg class="a" style="left:702px;top:369px" width="7" height="5"><path d="M0 0H7L3.5 4Z" fill="#e8e8e8"/></svg>
<div class="a" style="left:700px;top:127px;width:11px;height:73px;background:linear-gradient(90deg,#7c7c7c,#8e8e8e 50%,#7a7a7a);border-radius:3px"></div>
<svg class="a" style="left:703px;top:161px" width="10" height="15" viewBox="0 0 10 15"><path d="M0.5 0.5 V12.5 L3.3 9.8 L5.5 14.5 L7.3 13.7 L5.2 9.2 H9 Z" fill="#fff" stroke="#222" stroke-width="0.9"/></svg>
<svg class="a" style="left:719px;top:64px" width="16" height="12" viewBox="0 0 16 12"><circle cx="6" cy="6" r="3.3" fill="#d0d0d0"/><path d="M6 0.8V11.2M0.8 6H11.2M2.3 2.3L9.7 9.7M9.7 2.3L2.3 9.7" stroke="#d0d0d0" stroke-width="1.5"/><circle cx="6" cy="6" r="1.3" fill="#5a5a5a"/><path d="M12.5 7H15.5L14 8.6Z" fill="#bbb"/></svg>
<svg class="a" style="left:733px;top:379px" width="8" height="8"><g fill="#bbb"><rect x="6" y="0" width="1.5" height="1.5"/><rect x="6" y="3" width="1.5" height="1.5"/><rect x="3" y="3" width="1.5" height="1.5"/><rect x="6" y="6" width="1.5" height="1.5"/><rect x="3" y="6" width="1.5" height="1.5"/><rect x="0" y="6" width="1.5" height="1.5"/></g></svg>
<!-- HISTORY PANEL -->
<div class="a" style="left:809px;top:68px;width:189px;height:115px;background:#535353;border:1px solid #2c2c2c;border-right:0"></div>
<div class="a" style="left:810px;top:69px;width:188px;height:16px;background:#3f3f3f"></div>
<div class="a" style="left:810px;top:69px;width:45px;height:16px;background:#535353"></div>
<div class="t" style="left:816px;top:73px;font-size:9px;color:#e4e4e4;font-weight:bold;">History</div>
<svg class="a" style="left:961px;top:74px" width="9" height="6" viewBox="0 0 9 6"><path d="M0 0L4 3L0 6Z M4.5 0L8.5 3L4.5 6Z" fill="#d8d8d8"/></svg>
<div class="a" style="left:976px;top:72px;width:1px;height:10px;background:#2e2e2e"></div>
<div class="a" style="left:977px;top:72px;width:1px;height:10px;background:#555"></div>
<svg class="a" style="left:981px;top:73px" width="14" height="8" viewBox="0 0 14 8"><path d="M0 2.5H5L2.5 5.5Z" fill="#ddd"/><path d="M6 1H14M6 4H14M6 7H14" stroke="#bbb" stroke-width="1.2"/></svg>
<div class="a" style="left:810px;top:85px;width:174px;height:11px;background:#4c4c4c;border-bottom:1px solid #3a3a3a"></div>
<div class="a" style="left:810px;top:92px;width:174px;height:1px;background:#444"></div>
<div class="a" style="left:834px;top:86px;width:28px;height:4px;background:#fff;border-right:1px solid #111"></div>
<div class="a" style="left:810px;top:96px;width:174px;height:21px;background:#535353;border-bottom:1px solid #474747"></div>
<div class="a" style="left:814px;top:100px;width:12px;height:12px;border:1px solid #484848;background:repeating-linear-gradient(90deg,transparent 0 3px,#4d4d4d 3px 4px)"></div>
<svg class="a" style="left:839px;top:99px" width="14" height="14" viewBox="0 0 14 14"><path d="M0.5 2.5H9L10 1.5H13.5V13.5H0.5Z" fill="none" stroke="#d0d0d0" stroke-width="1"/><path d="M3 6H11M3 8.5H11M3 11H11" stroke="#aaa" stroke-width="1.2"/><rect x="1" y="0.5" width="7" height="1.5" fill="#ccc"/></svg>
<div class="t" style="left:864px;top:101.5px;font-size:9px;color:#e8e8e8;letter-spacing:-0.22px;">New</div>
<div class="a" style="left:810px;top:117px;width:174px;height:21px;background:#535353;border-bottom:1px solid #474747"></div>
<div class="a" style="left:814px;top:121px;width:12px;height:12px;border:1px solid #484848;background:repeating-linear-gradient(90deg,transparent 0 3px,#4d4d4d 3px 4px)"></div>
<svg class="a" style="left:839px;top:120px" width="14" height="14" viewBox="0 0 14 14"><path d="M0.5 2.5H9L10 1.5H13.5V13.5H0.5Z" fill="none" stroke="#d0d0d0" stroke-width="1"/><path d="M3 6H11M3 8.5H11M3 11H11" stroke="#aaa" stroke-width="1.2"/><rect x="1" y="0.5" width="7" height="1.5" fill="#ccc"/></svg>
<div class="t" style="left:864px;top:122.5px;font-size:9px;color:#e8e8e8;letter-spacing:-0.22px;">Make Layer</div>
<div class="a" style="left:810px;top:138px;width:174px;height:21px;background:#5b687d;border-bottom:1px solid #4a5568"></div>
<div class="a" style="left:814px;top:142px;width:12px;height:12px;border:1px solid #4f5a6c;background:repeating-linear-gradient(90deg,transparent 0 3px,#55617a 3px 4px)"></div>
<svg class="a" style="left:839px;top:141px" width="14" height="14" viewBox="0 0 14 14"><path d="M0.5 2.5H9L10 1.5H13.5V13.5H0.5Z" fill="none" stroke="#d0d0d0" stroke-width="1"/><path d="M3 6H11M3 8.5H11M3 11H11" stroke="#aaa" stroke-width="1.2"/><rect x="1" y="0.5" width="7" height="1.5" fill="#ccc"/></svg>
<div class="t" style="left:864px;top:143.5px;font-size:9px;color:#e8e8e8;letter-spacing:-0.22px;">Duplicate Layer</div>
<div class="a" style="left:983px;top:85px;width:15px;height:74px;background:#3c3c3c"></div>
<svg class="a" style="left:987px;top:91px" width="7" height="5" viewBox="0 0 7 5"><path d="M0 4H7L3.5 0Z" fill="#e8e8e8"/></svg>
<svg class="a" style="left:987px;top:150px" width="7" height="5" viewBox="0 0 7 5"><path d="M0 0H7L3.5 4Z" fill="#e8e8e8"/></svg>
<div class="a" style="left:985px;top:115px;width:11px;height:27px;background:linear-gradient(90deg,#7e7e7e,#929292 50%,#7b7b7b);border-radius:3px"></div>
<div class="a" style="left:810px;top:159px;width:188px;height:17px;background:#535353;border-top:1px solid #474747"></div>
<svg class="a" style="left:905px;top:163px" width="13" height="10" viewBox="0 0 13 10"><path d="M5 0.5H11L12.5 2V9.5H5Z" fill="#bbb"/><path d="M0 6H6M3 3V9" stroke="#ddd" stroke-width="1.6"/></svg>
<svg class="a" style="left:934px;top:163px" width="14" height="10" viewBox="0 0 14 10"><rect x="0.5" y="2" width="13" height="8" rx="1" fill="#bdbdbd"/><rect x="4" y="0.5" width="6" height="2" fill="#bdbdbd"/><circle cx="7" cy="6" r="2.6" fill="#535353"/><circle cx="7" cy="6" r="1.4" fill="#bdbdbd"/></svg>
<svg class="a" style="left:961px;top:162px" width="11" height="12" viewBox="0 0 11 12"><rect x="0" y="1.5" width="11" height="1.5" fill="#c0c0c0"/><rect x="3.5" y="0" width="4" height="1.5" fill="#c0c0c0"/><path d="M1.5 4H9.5L9 11.5H2Z" fill="#c0c0c0"/><path d="M4 5V10M5.5 5V10M7 5V10" stroke="#535353" stroke-width="0.7"/></svg>
<svg class="a" style="left:988px;top:165px" width="8" height="8" viewBox="0 0 8 8"><g fill="#6a6a6a"><rect x="6" y="0" width="1.5" height="1.5"/><rect x="6" y="3" width="1.5" height="1.5"/><rect x="3" y="3" width="1.5" height="1.5"/><rect x="6" y="6" width="1.5" height="1.5"/><rect x="3" y="6" width="1.5" height="1.5"/><rect x="0" y="6" width="1.5" height="1.5"/></g></svg>
<div class="a" style="left:810px;top:176px;width:188px;height:7px;background:#4a4a4a;border-top:1px solid #3a3a3a;border-bottom:1px solid #2c2c2c"></div>
<div class="a" style="left:895px;top:178px;width:16px;height:2px;background:repeating-linear-gradient(90deg,#333 0 1px,transparent 1px 2px)"></div>
<!-- DOCK COLUMN -->
<div class="a" style="left:998px;top:56px;width:1px;height:600px;background:#2e2e2e"></div>
<div class="a" style="left:999px;top:56px;width:34px;height:600px;background:#535353"></div>
<div class="a" style="left:1033px;top:56px;width:3px;height:600px;background:linear-gradient(90deg,#2c2c2c 33%,#393939 33% 66%,#2c2c2c 66%)"></div>
<div class="a" style="left:999px;top:56px;width:34px;height:10px;background:#3b3b3b"></div>
<svg class="a" style="left:1022px;top:58px" width="9" height="6" viewBox="0 0 9 6"><path d="M4 0L0 3L4 6Z M8.5 0L4.5 3L8.5 6Z" fill="#d8d8d8"/></svg>
<div class="a" style="left:999px;top:104px;width:34px;height:1px;background:#3a3a3a"></div>
<div class="a" style="left:999px;top:141px;width:34px;height:1px;background:#3a3a3a"></div>
<div class="a" style="left:1007px;top:71px;width:18px;height:2px;background:repeating-linear-gradient(90deg,#333 0 1px,transparent 1px 2px)"></div>
<div class="a" style="left:1007px;top:108px;width:18px;height:2px;background:repeating-linear-gradient(90deg,#333 0 1px,transparent 1px 2px)"></div>
<div class="a" style="left:1003px;top:78px;width:26px;height:21px;background:#3c3c3c;border-radius:3px"></div>
<svg class="a" style="left:1009px;top:81px" width="16" height="16" viewBox="0 0 16 16"><rect x="0.5" y="0.5" width="4" height="4" fill="none" stroke="#bbb"/><rect x="0.5" y="6" width="4" height="4" fill="none" stroke="#bbb"/><rect x="0" y="11.5" width="5" height="4.5" fill="#aaa"/><path d="M8 2 L10 0.5 M8 2 L10.5 3.5 M8 2 Q13 2 13 8 Q13 13 9 14" fill="none" stroke="#c8c8c8" stroke-width="1.5"/></svg>
<svg class="a" style="left:1009px;top:118px" width="16" height="16" viewBox="0 0 16 16"><path d="M5.5 1 L10 3 V9 L5.5 11 L1 9 V3Z" fill="#bbb"/><path d="M1 3 L5.5 5 L10 3 M5.5 5V11" stroke="#535353" stroke-width="0.8" fill="none"/><rect x="11.5" y="1" width="4" height="4" fill="#bbb"/><rect x="11.5" y="6.5" width="4" height="4" fill="#bbb"/><rect x="1" y="13" width="14" height="3" fill="#bbb"/></svg>
<!-- RIGHT COLUMN -->
<div class="a" style="left:1036px;top:56px;width:199px;height:600px;background:#535353"></div>
<div class="a" style="left:1036px;top:56px;width:199px;height:10px;background:#3b3b3b"></div>
<svg class="a" style="left:1227px;top:58px" width="9" height="6" viewBox="0 0 9 6"><path d="M0 0L4 3L0 6Z M4.5 0L8.5 3L4.5 6Z" fill="#d8d8d8"/></svg>
<div class="a" style="left:1036px;top:66px;width:199px;height:17px;background:#3f3f3f;border-top:1px solid #333"></div>
<div class="a" style="left:1036px;top:67px;width:36px;height:16px;background:#535353"></div>
<div class="a" style="left:1072px;top:67px;width:53px;height:16px;background:#414141;border-right:1px solid #363636"></div>
<div class="t" style="left:1043px;top:72px;font-size:9px;color:#e4e4e4;font-weight:bold;letter-spacing:-0.3px;">Color</div>
<div class="t" style="left:1079px;top:72px;font-size:9px;color:#9a9a9a;font-weight:bold;letter-spacing:-0.3px;">Swatches</div>
<svg class="a" style="left:1220px;top:71px" width="14" height="8" viewBox="0 0 14 8"><path d="M0 2.5H5L2.5 5.5Z" fill="#ddd"/><path d="M6 1H14M6 4H14M6 7H14" stroke="#bbb" stroke-width="1.2"/></svg>
<div class="a" style="left:1050px;top:100px;width:17px;height:17px;background:#fff;border:1px solid #444"></div>
<div class="a" style="left:1041px;top:91px;width:18px;height:17px;background:#ec0000;border:1px solid #e0e0e0;box-shadow:0 0 0 1px #3a3a3a"></div>
<div class="t" style="left:1075px;top:94px;font-size:9px;color:#e0e0e0;font-weight:bold;letter-spacing:-0.3px;">R</div>
<div class="t" style="left:1075px;top:116px;font-size:9px;color:#e0e0e0;font-weight:bold;letter-spacing:-0.3px;">G</div>
<div class="t" style="left:1075px;top:138px;font-size:9px;color:#e0e0e0;font-weight:bold;letter-spacing:-0.3px;">B</div>
<div class="a" style="left:1088px;top:90px;width:78px;height:7px;background:linear-gradient(90deg,#000,#ff0000);border:1px solid #6a6a6a"></div>
<div class="a" style="left:1088px;top:112px;width:78px;height:7px;background:linear-gradient(90deg,#ff0000,#ffff00);border:1px solid #6a6a6a"></div>
<div class="a" style="left:1088px;top:134px;width:78px;height:7px;background:linear-gradient(90deg,#ff0000,#ff00ff);border:1px solid #6a6a6a"></div>
<svg class="a" style="left:1161px;top:98px" width="9" height="7" viewBox="0 0 9 7"><path d="M4.5 0L9 4.5V6.5H0V4.5Z" fill="#bdbdbd"/><path d="M0 5H9V6.5H0Z" fill="#8a8a8a"/></svg>
<svg class="a" style="left:1083px;top:120px" width="9" height="7" viewBox="0 0 9 7"><path d="M4.5 0L9 4.5V6.5H0V4.5Z" fill="#bdbdbd"/><path d="M0 5H9V6.5H0Z" fill="#8a8a8a"/></svg>
<svg class="a" style="left:1083px;top:142px" width="9" height="7" viewBox="0 0 9 7"><path d="M4.5 0L9 4.5V6.5H0V4.5Z" fill="#bdbdbd"/><path d="M0 5H9V6.5H0Z" fill="#8a8a8a"/></svg>
<div class="a" style="left:1172px;top:90px;width:42px;height:16px;background:#3c3c3c"></div>
<div class="t" style="left:1176px;top:94px;font-size:9.6px;color:#f0f0f0;letter-spacing:-0.3px;">255</div>
<div class="a" style="left:1172px;top:112px;width:42px;height:16px;background:#3c3c3c"></div>
<div class="t" style="left:1176px;top:116px;font-size:9.6px;color:#f0f0f0;letter-spacing:-0.3px;">0</div>
<div class="a" style="left:1172px;top:134px;width:42px;height:16px;background:#3c3c3c"></div>
<div class="t" style="left:1176px;top:138px;font-size:9.6px;color:#f0f0f0;letter-spacing:-0.3px;">0</div>
<svg class="a" style="left:1045px;top:136px" width="11" height="11" viewBox="0 0 11 11"><path d="M5.5 0.5L10.5 10.5H0.5Z" fill="#c8c8c8"/><rect x="5" y="3.5" width="1.2" height="4" fill="#444"/><rect x="5" y="8.3" width="1.2" height="1.2" fill="#444"/></svg>
<div class="a" style="left:1061px;top:136px;width:11px;height:11px;background:#dd0020;border:1px solid #d8d8d8"></div>
<div class="a" style="left:1041px;top:158px;width:181px;height:14px;background:linear-gradient(#fff 0%,rgba(255,255,255,0) 40%,rgba(0,0,0,0) 55%,#000 100%),linear-gradient(90deg,#d81818 0%,#e8902a 8%,#ecdc22 16%,#90c430 25%,#22a040 34%,#20ae8c 43%,#22b4dc 51%,#2a78c4 59%,#22309a 67%,#5a1c90 75%,#b81c84 83%,#dc1458 90%,#d81020 100%)"></div>
<div class="a" style="left:1214px;top:158px;width:8px;height:7px;background:#fff"></div>
<div class="a" style="left:1214px;top:165px;width:8px;height:7px;background:#000"></div>
<div class="a" style="left:1036px;top:174px;width:199px;height:3px;background:#2e2e2e"></div>
<div class="a" style="left:1036px;top:177px;width:199px;height:15px;background:#3f3f3f"></div>
<div class="a" style="left:1036px;top:177px;width:66px;height:15px;background:#535353"></div>
<div class="a" style="left:1102px;top:177px;width:39px;height:15px;background:#414141;border-right:1px solid #363636"></div>
<div class="t" style="left:1043px;top:181px;font-size:9px;color:#e4e4e4;font-weight:bold;letter-spacing:-0.14px;">Adjustments</div>
<div class="t" style="left:1108px;top:181px;font-size:9px;color:#9a9a9a;font-weight:bold;letter-spacing:-0.3px;">Styles</div>
<svg class="a" style="left:1220px;top:181px" width="14" height="8" viewBox="0 0 14 8"><path d="M0 2.5H5L2.5 5.5Z" fill="#ddd"/><path d="M6 1H14M6 4H14M6 7H14" stroke="#bbb" stroke-width="1.2"/></svg>
<div class="t" style="left:1044px;top:198px;font-size:9.5px;color:#ececec;font-weight:bold;">Add an adjustment</div>
<svg class="a" style="left:1078px;top:215px" width="15" height="14" viewBox="0 0 15 14"><circle cx="7.5" cy="7" r="3.6" fill="none" stroke="#c0c0c0" stroke-width="1.3"/><path d="M7.5 3.4A3.6 3.6 0 0 1 7.5 10.6Z" fill="#c0c0c0"/><g stroke="#c0c0c0" stroke-width="1.3"><path d="M7.5 0V2M7.5 12V14M0.5 7H2.5M12.5 7H14.5M2.5 2L3.8 3.3M12.5 2L11.2 3.3M2.5 12L3.8 10.7M12.5 12L11.2 10.7"/></g></svg>
<svg class="a" style="left:1100px;top:215px" width="16" height="13" viewBox="0 0 16 13"><path d="M0.5 12.5V8L2 6L3 9L4.5 3L6 8L7 5L8.5 10L10 2L11.5 7L13 5L15.5 8V12.5Z" fill="#bbb"/><rect x="0" y="10" width="16" height="3" fill="#999"/></svg>
<svg class="a" style="left:1122px;top:215px" width="16" height="13" viewBox="0 0 16 13"><rect x="0.5" y="0.5" width="15" height="12" fill="#6a6a6a" stroke="#aaa"/><path d="M0.5 4.5H15.5M0.5 8.5H15.5M5.5 0.5V12.5M10.5 0.5V12.5" stroke="#8a8a8a" stroke-width="0.6"/><path d="M1 12 Q7 11 8 6 Q9 1 15 1" stroke="#ddd" stroke-width="1.2" fill="none"/></svg>
<svg class="a" style="left:1144px;top:215px" width="16" height="13" viewBox="0 0 16 13"><rect x="0.5" y="0.5" width="15" height="12" fill="#777" stroke="#bbb"/><path d="M0.5 12.5L15.5 0.5V12.5Z" fill="#505050"/><path d="M2.5 4H6.5M4.5 2V6M9.5 9.5H13.5" stroke="#eee" stroke-width="1.2"/></svg>
<svg class="a" style="left:1166px;top:214px" width="15" height="14" viewBox="0 0 15 14"><path d="M0.5 0.5H14.5L7.5 13.5Z" fill="none" stroke="#c0c0c0" stroke-width="1.3"/><path d="M2.5 1.5H12.5L7.5 11Z" fill="#8a8a8a"/></svg>
<svg class="a" style="left:1068px;top:239px" width="15" height="14" viewBox="0 0 15 14"><rect x="0.5" y="0.5" width="14" height="13" fill="#555" stroke="#bbb"/><rect x="1" y="1" width="4.3" height="6" fill="#ccc"/><rect x="5.3" y="1" width="4.3" height="6" fill="#999"/><rect x="9.6" y="1" width="4.4" height="6" fill="#ccc"/><rect x="1" y="7" width="13" height="6" fill="url(#gg)"/><defs><linearGradient id="gg"><stop offset="0" stop-color="#333"/><stop offset="1" stop-color="#ccc"/></linearGradient></defs></svg>
<svg class="a" style="left:1089px;top:239px" width="15" height="14" viewBox="0 0 15 14"><path d="M7.5 1V12M2 4H13M1 12H6M9 12H14" stroke="#c0c0c0" stroke-width="1.2"/><path d="M0.5 9L3 4L5.5 9Z M9.5 9L12 4L14.5 9Z" fill="#aaa" stroke="#c0c0c0" stroke-width="0.8"/><path d="M5 1H10L7.5 4Z" fill="#c0c0c0"/></svg>
<svg class="a" style="left:1111px;top:240px" width="15" height="13" viewBox="0 0 15 13"><rect x="0.5" y="0.5" width="14" height="12" fill="#c8c8c8" stroke="#aaa"/><rect x="1" y="1" width="6.5" height="11" fill="#4a4a4a"/></svg>
<svg class="a" style="left:1132px;top:238px" width="16" height="16" viewBox="0 0 16 16"><rect x="0.5" y="1" width="9" height="8" rx="1" fill="#bdbdbd"/><circle cx="5" cy="5" r="2.5" fill="#555"/><circle cx="10.5" cy="10.5" r="4.5" fill="#999" stroke="#ccc" stroke-width="1.2"/></svg>
<svg class="a" style="left:1154px;top:239px" width="16" height="15" viewBox="0 0 16 15"><circle cx="8" cy="5" r="4" fill="#c8c8c8"/><circle cx="5" cy="10" r="4" fill="#aaa"/><circle cx="11" cy="10" r="4" fill="#b8b8b8"/></svg>
<svg class="a" style="left:1177px;top:240px" width="16" height="13" viewBox="0 0 16 13"><rect x="0.5" y="0.5" width="15" height="12" fill="#666" stroke="#aaa"/><path d="M0.5 4.5H15.5M0.5 8.5H15.5M5.5 0.5V12.5M10.5 0.5V12.5" stroke="#bbb" stroke-width="0.8"/><rect x="1" y="1" width="4.5" height="3.5" fill="#ccc"/><rect x="6" y="5" width="4.5" height="3.5" fill="#aaa"/></svg>
<svg class="a" style="left:1078px;top:264px" width="15" height="13" viewBox="0 0 15 13"><rect x="0.5" y="0.5" width="14" height="12" fill="#777" stroke="#bbb"/><ellipse cx="7.5" cy="6.5" rx="3" ry="5" transform="rotate(40 7.5 6.5)" fill="#3a3a3a"/></svg>
<svg class="a" style="left:1100px;top:264px" width="15" height="13" viewBox="0 0 15 13"><rect x="0.5" y="0.5" width="14" height="12" fill="#888" stroke="#bbb"/><path d="M1 10L11 1H14V3L4 12H1Z" fill="#c8c8c8"/></svg>
<svg class="a" style="left:1122px;top:264px" width="15" height="13" viewBox="0 0 15 13"><rect x="0.5" y="0.5" width="14" height="12" fill="#888" stroke="#bbb"/><path d="M1 11L4 8L6 9L9 5L11 6L14 2" stroke="#222" stroke-width="1.6" fill="none"/></svg>
<svg class="a" style="left:1144px;top:264px" width="15" height="13" viewBox="0 0 15 13"><rect x="0.5" y="0.5" width="14" height="12" fill="#999" stroke="#bbb"/><path d="M1 1L7.5 6.5L1 12Z M14 1L7.5 6.5L14 12Z" fill="#555"/></svg>
<svg class="a" style="left:1166px;top:264px" width="15" height="13" viewBox="0 0 15 13"><rect x="0.5" y="0.5" width="14" height="12" fill="url(#g2)" stroke="#bbb"/><defs><linearGradient id="g2"><stop offset="0" stop-color="#333"/><stop offset="1" stop-color="#ccc"/></linearGradient></defs></svg>
<div class="a" style="left:1036px;top:286px;width:199px;height:3px;background:#2e2e2e"></div>
<div class="a" style="left:1036px;top:289px;width:199px;height:15px;background:#3f3f3f"></div>
<div class="a" style="left:1036px;top:289px;width:39px;height:15px;background:#535353"></div>
<div class="a" style="left:1075px;top:289px;width:52px;height:15px;background:#414141;border-right:1px solid #363636"></div>
<div class="a" style="left:1127px;top:289px;width:36px;height:15px;background:#414141;border-right:1px solid #363636"></div>
<div class="t" style="left:1042px;top:293px;font-size:9px;color:#e4e4e4;letter-spacing:-0.15px;">Layers</div>
<div class="t" style="left:1081px;top:293px;font-size:9px;color:#9a9a9a;">Channels</div>
<div class="t" style="left:1133px;top:293px;font-size:9px;color:#9a9a9a;">Paths</div>
<svg class="a" style="left:1220px;top:293px" width="14" height="8" viewBox="0 0 14 8"><path d="M0 2.5H5L2.5 5.5Z" fill="#ddd"/><path d="M6 1H14M6 4H14M6 7H14" stroke="#bbb" stroke-width="1.2"/></svg>
<div class="a" style="left:1040px;top:308px;width:63px;height:18px;background:linear-gradient(#666,#585858);border:1px solid #363636;border-radius:2px"></div>
<svg class="a" style="left:1045px;top:312px" width="10" height="10" viewBox="0 0 10 10"><circle cx="6" cy="4" r="3" fill="none" stroke="#ddd" stroke-width="1.2"/><path d="M4 6L0.5 9.5" stroke="#ddd" stroke-width="1.4"/></svg>
<div class="t" style="left:1059px;top:312px;font-size:9.6px;color:#ececec;letter-spacing:-0.3px;">Kind</div>
<svg class="a" style="left:1094px;top:311px" width="7" height="11" viewBox="0 0 7 11"><path d="M0.5 4H6.5L3.5 0.5Z M0.5 6.5H6.5L3.5 10Z" fill="#e0e0e0"/></svg>
<svg class="a" style="left:1114px;top:312px" width="12" height="10" viewBox="0 0 12 10"><rect x="0.5" y="0.5" width="11" height="9" fill="none" stroke="#aaa"/><path d="M2 8L4.5 5L6.5 7L8 5.5L10 8Z" fill="#aaa"/><circle cx="8.5" cy="3" r="1" fill="#aaa"/></svg>
<svg class="a" style="left:1137px;top:312px" width="10" height="10" viewBox="0 0 10 10"><circle cx="5" cy="5" r="4.5" fill="#a8a8a8"/><path d="M2 8L8 2" stroke="#535353" stroke-width="1.5"/></svg>
<div class="t" style="left:1158px;top:310px;font:13px 'Liberation Serif',serif;color:#b0b0b0">T</div>
<svg class="a" style="left:1181px;top:312px" width="11" height="11" viewBox="0 0 11 11"><rect x="1.5" y="1.5" width="8" height="8" fill="none" stroke="#aaa" stroke-width="1.2"/><g fill="#aaa"><rect x="0" y="0" width="3" height="3"/><rect x="8" y="0" width="3" height="3"/><rect x="0" y="8" width="3" height="3"/><rect x="8" y="8" width="3" height="3"/></g></svg>
<svg class="a" style="left:1202px;top:311px" width="11" height="12" viewBox="0 0 11 12"><path d="M4 0.5H9L10.5 2V8H4Z" fill="#9a9a9a"/><rect x="0.5" y="5" width="6" height="6.5" fill="#b8b8b8"/></svg>
<div class="a" style="left:1226px;top:310px;width:7px;height:13px;background:linear-gradient(#7e7e7e 50%,#3a3a3a 50%)"></div>
<div class="a" style="left:1036px;top:329px;width:199px;height:1px;background:#3e3e3e"></div>
<div class="a" style="left:1036px;top:330px;width:199px;height:1px;background:#5c5c5c"></div>
<div class="a" style="left:1040px;top:334px;width:101px;height:18px;background:linear-gradient(#666,#585858);border:1px solid #363636;border-radius:2px"></div>
<div class="t" style="left:1047px;top:338px;font-size:9.6px;color:#ececec;letter-spacing:-0.3px;">Normal</div>
<svg class="a" style="left:1132px;top:337px" width="7" height="11" viewBox="0 0 7 11"><path d="M0.5 4H6.5L3.5 0.5Z M0.5 6.5H6.5L3.5 10Z" fill="#e0e0e0"/></svg>
<div class="t" style="left:1147px;top:337px;font-size:9.6px;color:#e0e0e0;letter-spacing:-0.3px;">Opacity:</div>
<div class="a" style="left:1185px;top:334px;width:48px;height:17px;background:#363636;border:1px solid #2e2e2e"></div>
<div class="a" style="left:1217px;top:334px;width:16px;height:17px;background:#5e5e5e;border:1px solid #4a4a4a"></div>
<svg class="a" style="left:1222px;top:341px" width="6" height="4" viewBox="0 0 6 4"><path d="M0 0H6L3 4Z" fill="#eee"/></svg>
<div class="t" style="left:1190px;top:337px;font-size:9.6px;color:#f0f0f0;letter-spacing:-0.3px;">100%</div>
<div class="a" style="left:1036px;top:353px;width:199px;height:1px;background:#3e3e3e"></div>
<div class="a" style="left:1036px;top:354px;width:199px;height:1px;background:#5c5c5c"></div>
<div class="t" style="left:1042px;top:364px;font-size:9.6px;color:#e0e0e0;letter-spacing:-0.3px;">Lock:</div>
<div class="a" style="left:1071px;top:364px;width:10px;height:10px;background:conic-gradient(#ccc 25%,#777 0 50%,#ccc 0 75%,#777 0) 0 0/5px 5px"></div>
<svg class="a" style="left:1090px;top:363px" width="15" height="12" viewBox="0 0 15 12"><path d="M14 0.5L8 6.5L9 7.5L14.5 1.5Z" fill="#bdbdbd"/><path d="M8 6.5Q5 6 4 9Q3 11 0.5 11.5Q6 12.5 8.5 10Q10 8.5 8 6.5Z" fill="#c8c8c8"/></svg>
<svg class="a" style="left:1110px;top:362px" width="12" height="13" viewBox="0 0 12 13"><path d="M6 1V12M0.5 6.5H11.5" stroke="#c0c0c0" stroke-width="1.1"/><path d="M6 0L4.5 2H7.5Z M6 13L4.5 11H7.5Z M0 6.5L2 5V8Z M12 6.5L10 5V8Z" fill="#c0c0c0"/></svg>
<svg class="a" style="left:1132px;top:362px" width="10" height="13" viewBox="0 0 10 13"><path d="M2.5 6V4Q2.5 1 5 1Q7.5 1 7.5 4V6" fill="none" stroke="#aaa" stroke-width="1.5"/><rect x="1" y="6" width="8" height="6.5" rx="1" fill="#aaa"/><rect x="4.3" y="8" width="1.4" height="2.5" fill="#535353"/></svg>
<div class="t" style="left:1167px;top:364px;font-size:9.6px;color:#e0e0e0;letter-spacing:-0.3px;">Fill:</div>
<div class="a" style="left:1185px;top:360px;width:48px;height:16px;background:#363636;border:1px solid #2e2e2e"></div>
<div class="a" style="left:1217px;top:360px;width:16px;height:16px;background:#5e5e5e;border:1px solid #4a4a4a"></div>
<svg class="a" style="left:1222px;top:366px" width="6" height="4" viewBox="0 0 6 4"><path d="M0 0H6L3 4Z" fill="#eee"/></svg>
<div class="t" style="left:1190px;top:364px;font-size:9.6px;color:#f0f0f0;letter-spacing:-0.3px;">100%</div>
<div class="a" style="left:1036px;top:379px;width:199px;height:1px;background:#3e3e3e"></div>
<div class="a" style="left:1036px;top:380px;width:188px;height:258px;background:#474747"></div>
<div class="a" style="left:1224px;top:378px;width:11px;height:260px;background:#464646;border-left:1px solid #3e3e3e"></div>
<div class="a" style="left:1036px;top:383px;width:188px;height:34px;background:#535353;border-bottom:1px solid #3c3c3c"></div>
<div class="a" style="left:1098px;top:383px;width:126px;height:34px;background:#5a677c"></div>
<div class="a" style="left:1063px;top:383px;width:1px;height:34px;background:#474747"></div>
<svg class="a" style="left:1043px;top:396px" width="13" height="8" viewBox="0 0 13 8"><path d="M0.5 4Q6.5 -2 12.5 4Q6.5 10 0.5 4Z" fill="#aaa"/><circle cx="6.5" cy="4" r="2.3" fill="#3c3c3c"/><circle cx="5.8" cy="3.2" r="0.7" fill="#ddd"/></svg>
<div class="a" style="left:1065px;top:383px;width:33px;height:34px;border:2px solid #eee;clip-path:polygon(0 0,30% 0,30% 2px,70% 2px,70% 0,100% 0,100% 100%,70% 100%,70% calc(100% - 2px),30% calc(100% - 2px),30% 100%,0 100%)"></div>
<div class="a" style="left:1067px;top:385px;width:29px;height:30px;background:#fff;border:1px solid #222"></div>
<div class="t" style="left:1105px;top:398px;font-size:9px;color:#ececec;">Layer 0 copy</div>
<div class="a" style="left:1036px;top:417px;width:188px;height:37px;background:#535353;border-bottom:1px solid #3c3c3c"></div>
<div class="a" style="left:1063px;top:417px;width:1px;height:37px;background:#474747"></div>
<svg class="a" style="left:1043px;top:432px" width="13" height="8" viewBox="0 0 13 8"><path d="M0.5 4Q6.5 -2 12.5 4Q6.5 10 0.5 4Z" fill="#aaa"/><circle cx="6.5" cy="4" r="2.3" fill="#3c3c3c"/><circle cx="5.8" cy="3.2" r="0.7" fill="#ddd"/></svg>
<div class="a" style="left:1067px;top:421px;width:29px;height:30px;background:#fff;border:1px solid #222"></div>
<div class="t" style="left:1105px;top:433px;font-size:9px;color:#ececec;">Layer 0</div>
<div class="a" style="left:1036px;top:638px;width:199px;height:18px;background:#535353;border-top:1px solid #3c3c3c"></div>
<svg class="a" style="left:1053px;top:643px" width="12" height="7" viewBox="0 0 12 7"><rect x="0.7" y="0.7" width="6" height="5.6" rx="2.8" fill="none" stroke="#aaa" stroke-width="1.3"/><rect x="5.3" y="0.7" width="6" height="5.6" rx="2.8" fill="none" stroke="#aaa" stroke-width="1.3"/></svg>
<div class="t" style="left:1078px;top:641px;font:italic 12px 'Liberation Serif',serif;color:#c4c4c4">fx</div>
<svg class="a" style="left:1092px;top:651px" width="2" height="2" viewBox="0 0 2 2"><rect width="2" height="2" fill="#ccc"/></svg>
<svg class="a" style="left:1103px;top:643px" width="12" height="9" viewBox="0 0 12 9"><rect width="12" height="9" fill="#bbb"/><circle cx="6" cy="4.5" r="2.8" fill="#535353"/></svg>
<svg class="a" style="left:1128px;top:642px" width="11" height="11" viewBox="0 0 11 11"><circle cx="5.5" cy="5.5" r="5" fill="#bbb"/><path d="M2 9L9 2" stroke="#535353" stroke-width="1.5"/></svg>
<svg class="a" style="left:1141px;top:651px" width="2" height="2" viewBox="0 0 2 2"><rect width="2" height="2" fill="#ccc"/></svg>
<svg class="a" style="left:1151px;top:643px" width="13" height="9" viewBox="0 0 13 9"><path d="M0 1H5L6 2.5H13V9H0Z" fill="#bbb"/></svg>
<svg class="a" style="left:1177px;top:642px" width="11" height="11" viewBox="0 0 11 11"><path d="M4 0.5H10.5V10.5H0.5V4Z" fill="#bbb"/><path d="M0.5 4H4V0.5" fill="#535353"/></svg>
<svg class="a" style="left:1201px;top:641px" width="11" height="13" viewBox="0 0 11 13"><rect x="0" y="1.5" width="11" height="1.5" fill="#c0c0c0"/><rect x="3.5" y="0" width="4" height="1.5" fill="#c0c0c0"/><path d="M1.5 4H9.5L9 12.5H2Z" fill="#c0c0c0"/><path d="M4 5V11M5.5 5V11M7 5V11" stroke="#535353" stroke-width="0.7"/></svg><!-- TOOLS -->
<div class="a" style="left:70px;top:56px;width:1px;height:600px;background:#3a3a3a"></div>
<div class="a" style="left:71px;top:56px;width:34px;height:600px;background:#535353"></div>
<div class="a" style="left:105px;top:56px;width:1px;height:600px;background:#303030"></div>
<div class="a" style="left:71px;top:56px;width:34px;height:11px;background:#3b3b3b;border-bottom:1px solid #2e2e2e"></div>
<svg class="a" style="left:75px;top:58px" width="8" height="6"><path d="M0 0L3.5 3L0 6Z M4 0L7.5 3L4 6Z" fill="#cfcfcf"/></svg>
<div class="a" style="left:79px;top:71px;width:18px;height:3px;background:repeating-linear-gradient(90deg,#333 0 1px,transparent 1px 2px)"></div>
<svg class="a" style="left:80px;top:86px" width="17" height="13" viewBox="0 0 17 13"><path d="M0.5 0.5V10L3 7.5L8 7.5Z" fill="#c8c8c8"/><path d="M12 5V13M8 9H16" stroke="#bdbdbd" stroke-width="1.2"/><path d="M12 4L10.5 6H13.5Z M12 14L10.5 12H13.5Z M7 9L9 7.5V10.5Z M17 9L15 7.5V10.5Z" fill="#bdbdbd"/></svg>
<svg class="a" style="left:81px;top:110px" width="14" height="12" viewBox="0 0 14 12"><rect x="1" y="1" width="12" height="10" fill="none" stroke="#bdbdbd" stroke-width="1.3" stroke-dasharray="2.5 1.5"/></svg>
<svg class="a" style="left:95px;top:121px" width="4" height="4"><path d="M4 0V4H0Z" fill="#d8d8d8"/></svg>
<svg class="a" style="left:80px;top:133px" width="15" height="14" viewBox="0 0 15 14"><path d="M2 2 L7 5 L13 1 L13 8 L7 11 L3 9 Z M6 11 L4 14" fill="none" stroke="#bdbdbd" stroke-width="1.3"/></svg>
<svg class="a" style="left:95px;top:145px" width="4" height="4"><path d="M4 0V4H0Z" fill="#d8d8d8"/></svg>
<svg class="a" style="left:79px;top:157px" width="18" height="13" viewBox="0 0 18 13"><path d="M7 9 Q9 6 12 7 L17 2 L16 1 L11 5 Q8 5 7 9Z" fill="#bdbdbd"/><path d="M4 3 Q1 6 3 11" stroke="#bdbdbd" stroke-width="1.2" stroke-dasharray="1 1" fill="none"/><ellipse cx="9" cy="9.5" rx="4" ry="2.2" fill="#c0c0c0"/></svg>
<svg class="a" style="left:95px;top:168px" width="4" height="4"><path d="M4 0V4H0Z" fill="#d8d8d8"/></svg>
<svg class="a" style="left:80px;top:180px" width="15" height="15" viewBox="0 0 15 15"><path d="M3 0V12H15 M0 3H12V15" fill="none" stroke="#bdbdbd" stroke-width="1.6"/><path d="M5 9 L10 4" stroke="#bdbdbd" stroke-width="0.8"/></svg>
<svg class="a" style="left:95px;top:192px" width="4" height="4"><path d="M4 0V4H0Z" fill="#d8d8d8"/></svg>
<svg class="a" style="left:80px;top:203px" width="15" height="15" viewBox="0 0 15 15"><path d="M1 14 L2 11 L9 4 L11 6 L4 13 Z" fill="none" stroke="#c8c8c8" stroke-width="1.2"/><path d="M8 3 L11 0.5 Q13.5 0 14 2 Q14 4 12 6 L9 7 Z" fill="#bdbdbd"/></svg>
<svg class="a" style="left:95px;top:215px" width="4" height="4"><path d="M4 0V4H0Z" fill="#d8d8d8"/></svg>
<div class="a" style="left:75px;top:223px;width:27px;height:1px;background:#434343"></div>
<div class="a" style="left:75px;top:224px;width:27px;height:1px;background:#5c5c5c"></div>
<svg class="a" style="left:79px;top:230px" width="17" height="15" viewBox="0 0 17 15"><path d="M5 13 L15 3 Q13 0 11 1 L2 10 Q2 13 5 13Z" fill="#aaa"/><path d="M3 3 Q1 6 2 9" stroke="#bdbdbd" stroke-dasharray="1 1" stroke-width="1.2" fill="none"/><circle cx="8" cy="7" r="0.7" fill="#666"/><circle cx="10" cy="8" r="0.7" fill="#666"/><circle cx="9" cy="5" r="0.7" fill="#666"/></svg>
<svg class="a" style="left:95px;top:244px" width="4" height="4"><path d="M4 0V4H0Z" fill="#d8d8d8"/></svg>
<svg class="a" style="left:78px;top:253px" width="18" height="14" viewBox="0 0 18 14"><path d="M16 1 L9 8 L10 9 L17 2Z" fill="#bdbdbd"/><path d="M9 8 Q5 8 4 11 Q3 13 0.5 13 Q6 14.5 9 12 Q11 10 9 8Z" fill="#c8c8c8"/></svg>
<svg class="a" style="left:95px;top:268px" width="4" height="4"><path d="M4 0V4H0Z" fill="#d8d8d8"/></svg>
<svg class="a" style="left:80px;top:277px" width="15" height="14" viewBox="0 0 15 14"><circle cx="7.5" cy="3" r="2.6" fill="#bdbdbd"/><rect x="6.3" y="4" width="2.4" height="5" fill="#bdbdbd"/><rect x="1" y="9" width="13" height="3.5" fill="#c0c0c0"/><rect x="2" y="12.5" width="11" height="1.2" fill="#999"/></svg>
<svg class="a" style="left:95px;top:292px" width="4" height="4"><path d="M4 0V4H0Z" fill="#d8d8d8"/></svg>
<svg class="a" style="left:79px;top:301px" width="18" height="15" viewBox="0 0 18 15"><path d="M16 2 L9 9 L10 10 L17 3Z" fill="#bdbdbd"/><path d="M9 9 Q5 9 4 12 Q3 14 0.5 14 Q6 15.5 9 13 Q11 11 9 9Z" fill="#c8c8c8"/><path d="M8 3 Q5 2 3 4 M3 4 L5 4.5 M3 4 L3.5 2" stroke="#bdbdbd" stroke-width="1.2" fill="none"/></svg>
<svg class="a" style="left:95px;top:315px" width="4" height="4"><path d="M4 0V4H0Z" fill="#d8d8d8"/></svg>
<svg class="a" style="left:80px;top:326px" width="16" height="12" viewBox="0 0 16 12"><path d="M1 7 L7 1 H15 L9 7 Z" fill="#bdbdbd"/><path d="M1 7 H9 V11 H1Z M9 7 L15 1 V5 L9 11Z" fill="#9a9a9a"/></svg>
<svg class="a" style="left:95px;top:339px" width="4" height="4"><path d="M4 0V4H0Z" fill="#d8d8d8"/></svg>
<div class="a" style="left:80px;top:350px;width:15px;height:11px;background:linear-gradient(90deg,#3a3a3a,#d6d6d6);border:1px solid #bbb"></div>
<svg class="a" style="left:95px;top:363px" width="4" height="4"><path d="M4 0V4H0Z" fill="#d8d8d8"/></svg>
<svg class="a" style="left:82px;top:373px" width="11" height="13" viewBox="0 0 11 13"><path d="M5.5 0 Q10.5 7 10.5 8.5 Q10.5 13 5.5 13 Q0.5 13 0.5 8.5 Q0.5 7 5.5 0Z" fill="#b4b4b4"/></svg>
<svg class="a" style="left:95px;top:387px" width="4" height="4"><path d="M4 0V4H0Z" fill="#d8d8d8"/></svg>
<svg class="a" style="left:80px;top:397px" width="17" height="15" viewBox="0 0 17 15"><circle cx="6" cy="6" r="5" fill="#b8b8b8"/><path d="M9 9 L15 14" stroke="#bdbdbd" stroke-width="2"/></svg>
<svg class="a" style="left:95px;top:410px" width="4" height="4"><path d="M4 0V4H0Z" fill="#d8d8d8"/></svg>
<div class="a" style="left:75px;top:418px;width:27px;height:1px;background:#434343"></div>
<div class="a" style="left:75px;top:419px;width:27px;height:1px;background:#5c5c5c"></div>
<svg class="a" style="left:80px;top:423px" width="16" height="15" viewBox="0 0 16 15"><path d="M1 14 L3 7 L9 3 L12 6 L8 12 Z" fill="#bdbdbd"/><path d="M9 2 L11 0.5 L15 4.5 L13 6 Z" fill="#bdbdbd"/><circle cx="6" cy="9" r="1" fill="#555"/></svg>
<svg class="a" style="left:95px;top:436px" width="4" height="4"><path d="M4 0V4H0Z" fill="#d8d8d8"/></svg>
<div class="t" style="left:85px;top:446px;font:16px 'Liberation Serif',serif;color:#c4c4c4">T</div>
<svg class="a" style="left:79px;top:446px" width="6" height="15" viewBox="0 0 6 15"><path d="M3 0V13 M1 10.5L3 13.5L5 10.5" stroke="#bdbdbd" stroke-width="1.1" fill="none"/></svg>
<svg class="a" style="left:95px;top:460px" width="4" height="4"><path d="M4 0V4H0Z" fill="#d8d8d8"/></svg>
<svg class="a" style="left:83px;top:470px" width="10" height="14" viewBox="0 0 10 14"><path d="M1 0.5 V12 L4 9 L6.5 13.5 L8 12.7 L5.8 8.5 H9.5 Z" fill="#bdbdbd"/></svg>
<svg class="a" style="left:95px;top:484px" width="4" height="4"><path d="M4 0V4H0Z" fill="#d8d8d8"/></svg>
<div class="a" style="left:74px;top:491px;width:28px;height:20px;background:#3a3a3a;border:1px solid #2c2c2c;border-radius:2px"></div>
<svg class="a" style="left:80px;top:493px" width="17" height="15" viewBox="0 0 17 15"><path d="M3 6 Q1 3 4 2 Q7 1 8 4 Q10 0.5 14 2 Q17 4 15 7 Q18 9.5 16 12 Q13 14.5 11 11 Q9 15 5 14 Q2 12 5 9 Q1 9 3 6 Z" fill="#7a7a7a" stroke="#bdbdbd" stroke-width="1.3"/></svg>
<svg class="a" style="left:95px;top:506px" width="4" height="4"><path d="M4 0V4H0Z" fill="#d8d8d8"/></svg>
<div class="a" style="left:75px;top:514px;width:27px;height:1px;background:#434343"></div>
<div class="a" style="left:75px;top:515px;width:27px;height:1px;background:#5c5c5c"></div>
<svg class="a" style="left:80px;top:520px" width="16" height="15" viewBox="0 0 16 15"><path d="M3 9 Q1 6 2 6 Q3 6 5 8 L4 2 Q5 1 6 2 L7 7 L7.5 1 Q8.5 0 9.5 1 L9.5 7 L11 2 Q12 1.5 12.5 2.5 L12 8 L13.5 5 Q15 5 14.5 6.5 L13 11 Q12 14.5 8 14.5 Q5 14.5 3 9Z" fill="#c4c4c4"/></svg>
<svg class="a" style="left:95px;top:532px" width="4" height="4"><path d="M4 0V4H0Z" fill="#d8d8d8"/></svg>
<svg class="a" style="left:80px;top:543px" width="16" height="15" viewBox="0 0 16 15"><circle cx="6" cy="6" r="4.5" fill="#9a9a9a" stroke="#c0c0c0" stroke-width="1.3"/><path d="M9 9 L15 14" stroke="#c0c0c0" stroke-width="2.2"/></svg>
<div class="a" style="left:77px;top:569px;width:7px;height:6px;background:#ddd"></div>
<div class="a" style="left:74px;top:566px;width:6px;height:6px;background:#222;border:1px solid #ddd"></div>
<svg class="a" style="left:90px;top:564px" width="11" height="11" viewBox="0 0 11 11"><path d="M2 4 Q7 1 8 7" stroke="#c8c8c8" stroke-width="1.3" fill="none"/><path d="M0 4L3 2V6Z M8 10L6 7H10Z" fill="#c8c8c8"/></svg>
<div class="a" style="left:83px;top:589px;width:18px;height:17px;background:#fff;border:1px solid #444"></div>
<div class="a" style="left:75px;top:580px;width:17px;height:17px;background:#ec0000;border:1px solid #e8e8e8;box-shadow:0 0 0 1px #3a3a3a"></div>
<div class="a" style="left:79px;top:614px;width:16px;height:12px;background:#3c3c3c;border:1px solid #c8c8c8"></div>
<div class="a" style="left:83px;top:616px;width:8px;height:8px;border-radius:50%;border:1px solid #bbb"></div>
<div class="a" style="left:79px;top:641px;width:11px;height:10px;background:#8a8a8a;border:1px solid #aaa"></div>
<div class="a" style="left:84px;top:639px;width:11px;height:9px;background:#6a6a6a;border:1px solid #d0d0d0"></div>
<svg class="a" style="left:95px;top:651px" width="4" height="4"><path d="M4 0V4H0Z" fill="#d8d8d8"/></svg></body></html>
